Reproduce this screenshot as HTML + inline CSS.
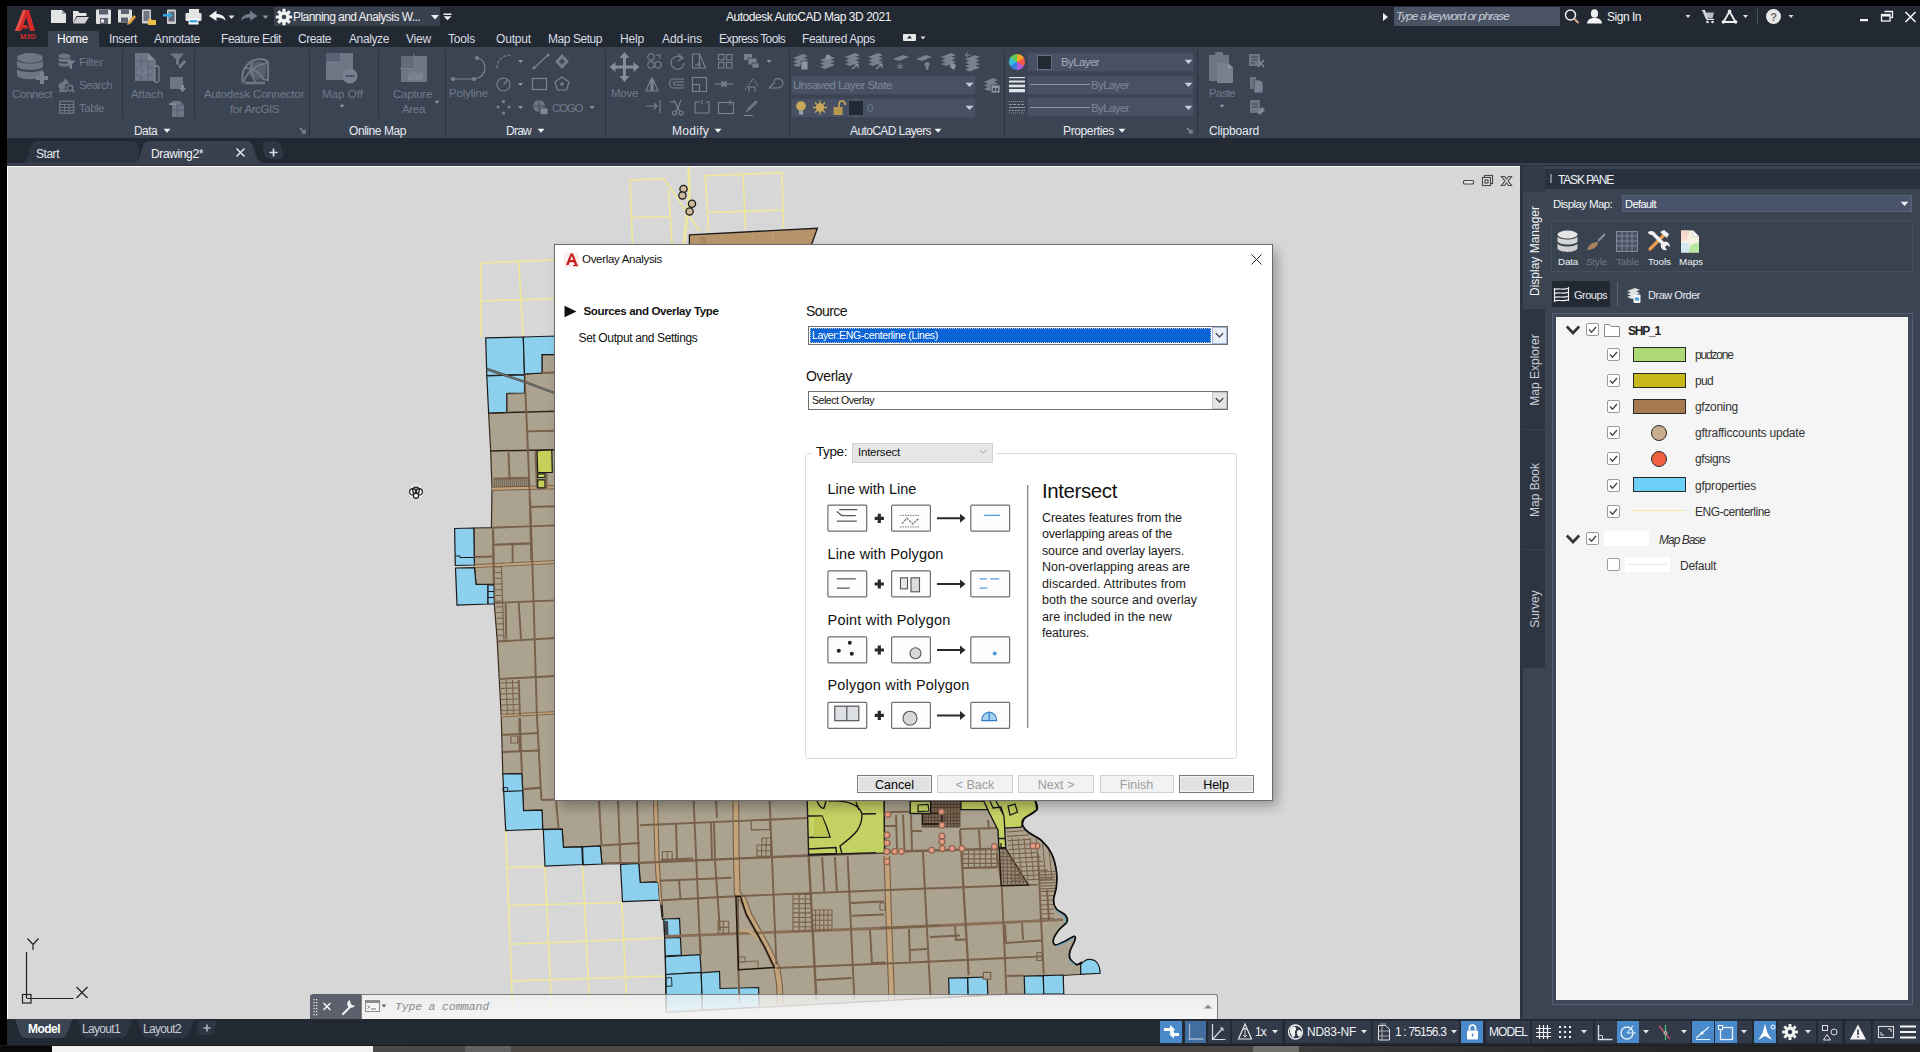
<!DOCTYPE html>
<html><head>
<meta charset="utf-8">
<title>Autodesk AutoCAD Map 3D 2021</title>
<style>
*{box-sizing:border-box;margin:0;padding:0}
html,body{width:1920px;height:1052px;overflow:hidden;background:#000}
body{position:relative;font-family:"Liberation Sans",sans-serif;font-size:12px;color:#e6e9ee}
.abs{position:absolute}
.t{position:absolute;white-space:nowrap;line-height:1}
#titlebar{left:7px;top:6px;width:1913px;height:22px;background:#222933}
#menubar{left:7px;top:28px;width:1913px;height:19px;background:#222933}
#ribbon{left:7px;top:47px;width:1913px;height:91px;background:#3b4453}
#doctabs{left:7px;top:138px;width:1913px;height:28px;background:#222933}
#canvas{left:7px;top:166px;width:1513px;height:853px;background:#d7d7d7;overflow:hidden}
#rightbg{left:1520px;top:166px;width:400px;height:853px;background:#3b4453}
#statusbar{left:7px;top:1019px;width:1913px;height:26px;background:#222933}
#bottomstrip{left:0;top:1045px;width:1920px;height:7px;background:#3a3a3a}
.mt{position:absolute;top:33px;font-size:12px;color:#d8dce3;white-space:nowrap;line-height:1}
.dis{color:#6d7685}
.ptitle{position:absolute;top:125px;font-size:12px;color:#e6e9ee;white-space:nowrap;line-height:1}
.psep{position:absolute;top:50px;width:1px;height:86px;background:#2c3441}
</style>
</head>
<body>
<!-- ===== window chrome ===== -->
<div class="abs" id="titlebar"></div>
<div class="abs" id="menubar"></div>
<div class="abs" id="ribbon"></div>
<div class="abs" id="doctabs"></div>
<div class="abs" id="canvas">
<svg class="abs" style="left:-7px;top:-166px" width="1920" height="1052" viewBox="0 0 1920 1052">
<polyline points="481,337 481,263 555,260" fill="none" stroke="#efe79a" stroke-width="1.6"></polyline>
<polyline points="518.8,261 523,337" fill="none" stroke="#efe79a" stroke-width="1.6"></polyline>
<polyline points="482,301 555,298.5" fill="none" stroke="#efe79a" stroke-width="1.6"></polyline>
<polyline points="632.5,245 630,180 664,178.6 700,232" fill="none" stroke="#efe79a" stroke-width="1.6"></polyline>
<polyline points="668.6,190 672,245" fill="none" stroke="#efe79a" stroke-width="1.6"></polyline>
<polyline points="631.5,217.5 670,216.8" fill="none" stroke="#efe79a" stroke-width="1.6"></polyline>
<polyline points="688.5,166 689.5,195 687,215 684,245" fill="none" stroke="#efe79a" stroke-width="2.6"></polyline>
<polyline points="708.6,231 705.4,175.7 782,172.7 783.5,228" fill="none" stroke="#efe79a" stroke-width="1.6"></polyline>
<polyline points="743,174 745.6,229.6" fill="none" stroke="#efe79a" stroke-width="1.6"></polyline>
<polyline points="707.3,212.5 782.8,210" fill="none" stroke="#efe79a" stroke-width="1.6"></polyline>
<polyline points="505.7,831 512.8,1015" fill="none" stroke="#efe79a" stroke-width="1.6"></polyline>
<polyline points="545,867 551.8,1015" fill="none" stroke="#efe79a" stroke-width="1.6"></polyline>
<polyline points="582.6,865.4 590,1015" fill="none" stroke="#efe79a" stroke-width="1.6"></polyline>
<polyline points="621.7,902.4 627.5,1015" fill="none" stroke="#efe79a" stroke-width="1.6"></polyline>
<polyline points="506.5,867.4 545,866.5" fill="none" stroke="#efe79a" stroke-width="1.6"></polyline>
<polyline points="508.5,905.5 621.7,902.5" fill="none" stroke="#efe79a" stroke-width="1.6"></polyline>
<polyline points="510.5,944.3 664,938" fill="none" stroke="#efe79a" stroke-width="1.6"></polyline>
<polyline points="512,981 665,976" fill="none" stroke="#efe79a" stroke-width="1.6"></polyline>
<path d="M542 354.7 L556 354.3 L556 800 L1035 800 C1035.3 801.6 1038.7 806.5 1036.9 809.6 C1035.1 812.7 1026.6 816.0 1024.2 818.4 C1021.8 820.8 1021.6 821.9 1022.3 824.2 C1022.9 826.5 1024.8 829.2 1028.1 832.0 C1031.3 834.8 1037.9 837.2 1041.8 840.8 C1045.7 844.4 1049.1 848.5 1051.5 853.5 C1053.9 858.5 1055.6 865.5 1056.4 871.0 C1057.2 876.5 1056.9 881.7 1056.4 886.6 C1055.9 891.5 1053.5 896.5 1053.5 900.2 C1053.5 903.9 1054.5 906.5 1056.4 909.0 C1058.3 911.5 1063.3 912.8 1065.1 914.9 C1066.9 917.0 1068.1 919.3 1067.1 921.7 C1066.1 924.1 1061.6 926.6 1059.3 929.5 C1057.0 932.4 1054.2 936.6 1053.5 939.2 C1052.8 941.8 1053.5 944.7 1055.4 945.0 C1057.3 945.3 1062.0 942.7 1065.1 941.2 C1068.2 939.8 1072.3 936.5 1073.9 936.3 C1075.5 936.1 1075.6 937.8 1074.9 940.2 C1074.2 942.7 1070.8 947.9 1070.0 951.0 C1069.2 954.1 1068.9 956.4 1070.0 958.7 C1071.1 961.0 1075.0 963.9 1076.8 964.6 C1078.6 965.3 1080.0 963.3 1080.7 963.0 L1080.7 974.3 L1063.2 975.5 L1063.2 994 L1007 994.3 L952 997 L760 1007.4 L666 1012.5 L665.3 956 L663.9 919 L662.4 919.5 L660.2 901 L659.6 900.2 L658.2 881.9 L640.2 882.5 L638.8 863.4 L602 864 L600.3 846 L563.5 847.4 L562.1 829.2 L542.7 829.2 L542.1 810.1 L523.6 810.6 L521.9 773.6 L502.8 774 L501.3 718 L497.2 640 L494.3 603.9 L494 585 L476 584.5 L474.5 567 L473.8 528 L491.4 527.7 L492 489 L490.7 451 L488.6 413 L506.7 412.4 L506.7 393.5 L524.5 393 L524.5 374 L542 373 Z" fill="#aba28f" stroke="#3a2a1c" stroke-width="1.200"></path>
<clipPath id="bc"><path d="M542 354.7 L556 354.3 L556 800 L1035 800 C1035.3 801.6 1038.7 806.5 1036.9 809.6 C1035.1 812.7 1026.6 816.0 1024.2 818.4 C1021.8 820.8 1021.6 821.9 1022.3 824.2 C1022.9 826.5 1024.8 829.2 1028.1 832.0 C1031.3 834.8 1037.9 837.2 1041.8 840.8 C1045.7 844.4 1049.1 848.5 1051.5 853.5 C1053.9 858.5 1055.6 865.5 1056.4 871.0 C1057.2 876.5 1056.9 881.7 1056.4 886.6 C1055.9 891.5 1053.5 896.5 1053.5 900.2 C1053.5 903.9 1054.5 906.5 1056.4 909.0 C1058.3 911.5 1063.3 912.8 1065.1 914.9 C1066.9 917.0 1068.1 919.3 1067.1 921.7 C1066.1 924.1 1061.6 926.6 1059.3 929.5 C1057.0 932.4 1054.2 936.6 1053.5 939.2 C1052.8 941.8 1053.5 944.7 1055.4 945.0 C1057.3 945.3 1062.0 942.7 1065.1 941.2 C1068.2 939.8 1072.3 936.5 1073.9 936.3 C1075.5 936.1 1075.6 937.8 1074.9 940.2 C1074.2 942.7 1070.8 947.9 1070.0 951.0 C1069.2 954.1 1068.9 956.4 1070.0 958.7 C1071.1 961.0 1075.0 963.9 1076.8 964.6 C1078.6 965.3 1080.0 963.3 1080.7 963.0 L1080.7 974.3 L1063.2 975.5 L1063.2 994 L1007 994.3 L952 997 L760 1007.4 L666 1012.5 L665.3 956 L663.9 919 L662.4 919.5 L660.2 901 L659.6 900.2 L658.2 881.9 L640.2 882.5 L638.8 863.4 L602 864 L600.3 846 L563.5 847.4 L562.1 829.2 L542.7 829.2 L542.1 810.1 L523.6 810.6 L521.9 773.6 L502.8 774 L501.3 718 L497.2 640 L494.3 603.9 L494 585 L476 584.5 L474.5 567 L473.8 528 L491.4 527.7 L492 489 L490.7 451 L488.6 413 L506.7 412.4 L506.7 393.5 L524.5 393 L524.5 374 L542 373 Z"></path></clipPath>
<polygon points="485.7,337.8 523.3,337 524.5,374.5 486.8,375.5" fill="#8cd0ed" stroke="#1a1a1a" stroke-width="1.2"></polygon>
<polygon points="523.3,337 556,336 556,354.3 542,354.7 542,373 524.5,374" fill="#8cd0ed" stroke="#1a1a1a" stroke-width="1.2"></polygon>
<polygon points="486.8,376 524.5,374.8 524.5,393 506.7,393.5 506.7,412.4 488.6,413" fill="#8cd0ed" stroke="#1a1a1a" stroke-width="1.2"></polygon>
<polyline points="486.8,369 524,381.6 556,393.5" fill="none" stroke="#4a4a4a" stroke-width="2.4"></polyline>
<polyline points="486.8,369 524,381.6 556,393.5" fill="none" stroke="#8a8a82" stroke-width="0.8"></polyline>
<polygon points="454.6,528.5 473.8,528 474.4,565 455.3,565.5" fill="#8cd0ed" stroke="#1a1a1a" stroke-width="1.2"></polygon>
<polyline points="455.2,556 460,556 460,557.5 474,557.5" fill="none" stroke="#1a1a1a" stroke-width="1"></polyline>
<polygon points="455.5,568 474.5,567.6 476,584.5 488,584.5 488,604 457,605.2" fill="#8cd0ed" stroke="#1a1a1a" stroke-width="1.2"></polygon>
<polygon points="488,585 494,585 494.3,604 488,604" fill="#8cd0ed" stroke="#1a1a1a" stroke-width="1.2"></polygon>
<polyline points="488,591.5 494.2,591.5" fill="none" stroke="#1a1a1a" stroke-width="1"></polyline>
<polyline points="488,597.5 494.2,597.5" fill="none" stroke="#1a1a1a" stroke-width="1"></polyline>
<polygon points="502.8,774 521.9,773.6 523.6,810.6 542.1,810.1 542.7,829.2 505.7,830.6" fill="#8cd0ed" stroke="#1a1a1a" stroke-width="1.2"></polygon>
<polyline points="503.2,791.5 522.6,790.8" fill="none" stroke="#1a1a1a" stroke-width="1.1"></polyline>
<polygon points="503,787.6 507.6,787.6 507.6,791.5 503,791.5" fill="none" stroke="#1a1a1a" stroke-width="0.9"></polygon>
<polygon points="543.3,829.7 562.1,829.2 563.5,847.4 581.8,846.9 582.6,864.5 545,866.2" fill="#8cd0ed" stroke="#1a1a1a" stroke-width="1.2"></polygon>
<polygon points="582.6,846.9 600.3,846 602,864 583.2,864.8" fill="#8cd0ed" stroke="#1a1a1a" stroke-width="1.2"></polygon>
<polygon points="620.5,864.5 638.8,863.4 640.2,882.5 658.2,881.9 659.6,900.2 622.5,901.6" fill="#8cd0ed" stroke="#1a1a1a" stroke-width="1.2"></polygon>
<polygon points="663.9,919 679.5,918.4 680.4,936.6 664.7,937.2" fill="#8cd0ed" stroke="#1a1a1a" stroke-width="1.2"></polygon>
<polygon points="664.7,938 680.4,937.5 681.3,955.2 665.3,956" fill="#8cd0ed" stroke="#1a1a1a" stroke-width="1.2"></polygon>
<polygon points="665.3,956.6 700,954.6 701.2,972.3 665.8,974.5" fill="#8cd0ed" stroke="#1a1a1a" stroke-width="1.2"></polygon>
<polygon points="665.8,974.5 701.2,972.3 702.5,1010 666.5,1012" fill="#8cd0ed" stroke="#1a1a1a" stroke-width="1.2"></polygon>
<polygon points="701.2,972.8 719.5,971.5 720,988.5 758.6,987.5 759.2,1007 702.5,1010" fill="#8cd0ed" stroke="#1a1a1a" stroke-width="1.2"></polygon>
<polygon points="665.8,978 671.5,977.6 672,986 666,986.4" fill="none" stroke="#1a1a1a" stroke-width="0.9"></polygon>
<polygon points="660.8,903 662.5,903 663.5,917 661.5,917" fill="#222" stroke="none" stroke-width="1"></polygon>
<polygon points="664.5,921 668,921 668.5,935 665,935" fill="#333" stroke="none" stroke-width="1" opacity="0.85"></polygon>
<polygon points="948.6,978.2 967.7,977.6 968.2,996.2 949.2,997.2" fill="#8cd0ed" stroke="#1a1a1a" stroke-width="1.2"></polygon>
<polygon points="967.7,977.6 987.2,977 987.8,995.2 968.2,996.2" fill="#8cd0ed" stroke="#1a1a1a" stroke-width="1.2"></polygon>
<polygon points="983.3,972.3 990.7,972.3 990.7,979.2 983.3,979.2" fill="#aba28f" stroke="#786049" stroke-width="1.2"></polygon>
<polygon points="1024.2,976.2 1043.3,975.6 1043.8,994.2 1024.8,994.3" fill="#8cd0ed" stroke="#1a1a1a" stroke-width="1.2"></polygon>
<polygon points="1043.3,975.6 1063.2,975 1063.8,994 1043.8,994.2" fill="#8cd0ed" stroke="#1a1a1a" stroke-width="1.2"></polygon>
<path d="M1080.700 974.300 L1080.700 964.600 C1084 960 1088 958.600 1092 959.600 C1097 960.500 1100 966 1100.200 973.300 Z" fill="#8cd0ed" stroke="#1a1a1a" stroke-width="1.200"></path>
<g clip-path="url(#bc)">
<polyline points="735.8,800 736.2,850 737.2,893 740.5,897 743.5,900 749,915 767.5,948 777,968.5 779.5,985 780.2,1005" fill="none" stroke="#786049" stroke-width="6.8"></polyline>
<polyline points="735.8,800 736.2,850 737.2,893 740.5,897 743.5,900 749,915 767.5,948 777,968.5 779.5,985 780.2,1005" fill="none" stroke="#c4a47b" stroke-width="4.6"></polyline>
<polyline points="655.5,800 657,860 660,905" fill="none" stroke="#786049" stroke-width="5.2"></polyline>
<polyline points="655.5,800 657,860 660,905" fill="none" stroke="#c4a47b" stroke-width="3"></polyline>
<polyline points="886.8,856 888.8,920 891.8,1002" fill="none" stroke="#786049" stroke-width="6.6"></polyline>
<polyline points="886.8,856 888.8,920 891.8,1002" fill="none" stroke="#c4a47b" stroke-width="4.4"></polyline>
<polyline points="474.2,566.2 556,562" fill="none" stroke="#c4a47b" stroke-width="3"></polyline>
<polyline points="492,488.8 556,487.2" fill="none" stroke="#c4a47b" stroke-width="3"></polyline>
<polyline points="500.5,715.7 556,712.7" fill="none" stroke="#c4a47b" stroke-width="2.6"></polyline>
<polyline points="665.3,936.3 900,927.5 1063,919.7" fill="none" stroke="#8a6f58" stroke-width="2.8"></polyline>
<polyline points="738.5,931 747,930.5 754,934 758,940" fill="none" stroke="#c4a47b" stroke-width="2.6"></polyline>
<polyline points="686,232 690,245" fill="none" stroke="#c4a47b" stroke-width="2"></polyline>
<polyline points="488.6,413 556,411.3" fill="none" stroke="#2e241a" stroke-width="1.5"></polyline>
<polyline points="490.7,451 556,449.7" fill="none" stroke="#2e241a" stroke-width="1.5"></polyline>
<polyline points="492,487.2 556,485.6" fill="none" stroke="#786049" stroke-width="1"></polyline>
<polyline points="492,490.4 556,488.8" fill="none" stroke="#786049" stroke-width="1"></polyline>
<polyline points="491.4,527.7 556,525.4" fill="none" stroke="#786049" stroke-width="1.9"></polyline>
<polyline points="524.5,374 526.3,412.4 527.9,450 529.5,489.4 531.3,560" fill="none" stroke="#786049" stroke-width="1.9"></polyline>
<polyline points="530.2,500 533.6,602.7 536.9,715.6 541.4,800" fill="none" stroke="#786049" stroke-width="1.9"></polyline>
<polyline points="527.9,431.4 556,430.8" fill="none" stroke="#786049" stroke-width="1.9"></polyline>
<polyline points="530,507 556,506.3" fill="none" stroke="#786049" stroke-width="1.9"></polyline>
<polyline points="508.5,452.4 509.6,479.8" fill="none" stroke="#786049" stroke-width="1.9"></polyline>
<polyline points="535.4,451.3 537,487.8" fill="none" stroke="#786049" stroke-width="1.9"></polyline>
<polyline points="506.7,393.5 524.5,393" fill="none" stroke="#786049" stroke-width="1.9"></polyline>
<polyline points="506.7,412.4 506.7,393.5" fill="none" stroke="#786049" stroke-width="1.9"></polyline>
<polyline points="542,373 556,372.5" fill="none" stroke="#786049" stroke-width="1.9"></polyline>
<polyline points="493.6,544.8 531,543.4" fill="none" stroke="#786049" stroke-width="2.3"></polyline>
<polyline points="512.6,544.5 512.6,562.8" fill="none" stroke="#786049" stroke-width="1.9"></polyline>
<polyline points="493,528.5 494.3,603.9" fill="none" stroke="#786049" stroke-width="2.3"></polyline>
<polyline points="474.2,557 493.5,556.5" fill="none" stroke="#786049" stroke-width="1.9"></polyline>
<polyline points="474.2,564.7 556,560.5" fill="none" stroke="#786049" stroke-width="0.9"></polyline>
<polyline points="474.2,567.7 556,563.5" fill="none" stroke="#786049" stroke-width="0.9"></polyline>
<polyline points="476,584.5 494,584.5" fill="none" stroke="#2e241a" stroke-width="1.3"></polyline>
<polyline points="494.3,603 556,600.4" fill="none" stroke="#786049" stroke-width="1.9"></polyline>
<polyline points="505.7,603.9 506.2,639.2" fill="none" stroke="#786049" stroke-width="1.9"></polyline>
<polyline points="518.7,603 521,639" fill="none" stroke="#786049" stroke-width="1.9"></polyline>
<polyline points="497.2,641.5 556,638" fill="none" stroke="#786049" stroke-width="1.9"></polyline>
<polyline points="499,679 556,676" fill="none" stroke="#786049" stroke-width="1.9"></polyline>
<polyline points="500.5,714.5 556,711.5" fill="none" stroke="#786049" stroke-width="0.9"></polyline>
<polyline points="500.5,717 556,714" fill="none" stroke="#786049" stroke-width="0.9"></polyline>
<polyline points="518.7,680 520,715.7" fill="none" stroke="#786049" stroke-width="1.9"></polyline>
<polyline points="520,718 521,752" fill="none" stroke="#786049" stroke-width="1.9"></polyline>
<polyline points="502,735 538,733" fill="none" stroke="#786049" stroke-width="1.9"></polyline>
<polyline points="503,752 540,750.5" fill="none" stroke="#786049" stroke-width="1.9"></polyline>
<polyline points="503.5,791 541,787.7" fill="none" stroke="#786049" stroke-width="2.3"></polyline>
<polyline points="519.5,718 519.5,752" fill="none" stroke="#786049" stroke-width="1.9"></polyline>
<polyline points="521,752 522,773.6" fill="none" stroke="#786049" stroke-width="1.9"></polyline>
<polygon points="510.9,736 517.7,736 517.7,743 510.9,743" fill="none" stroke="#786049" stroke-width="1.2"></polygon>
<polyline points="494.8,567 501.6,566.8" fill="none" stroke="#786049" stroke-width="1"></polyline>
<polyline points="495,572.7 501.8,572.5" fill="none" stroke="#786049" stroke-width="1"></polyline>
<polyline points="495.2,578.4 502,578.2" fill="none" stroke="#786049" stroke-width="1"></polyline>
<polyline points="495.4,584.1 502.2,583.9" fill="none" stroke="#786049" stroke-width="1"></polyline>
<polyline points="495.6,589.8 502.4,589.6" fill="none" stroke="#786049" stroke-width="1"></polyline>
<polyline points="495.8,595.5 502.6,595.3" fill="none" stroke="#786049" stroke-width="1"></polyline>
<polyline points="496,601.2 502.8,601" fill="none" stroke="#786049" stroke-width="1"></polyline>
<polyline points="496.2,606.9 503,606.7" fill="none" stroke="#786049" stroke-width="1"></polyline>
<polyline points="496.4,612.6 503.2,612.4" fill="none" stroke="#786049" stroke-width="1"></polyline>
<polyline points="496.6,618.3 503.4,618.1" fill="none" stroke="#786049" stroke-width="1"></polyline>
<polyline points="496.8,624 503.6,623.8" fill="none" stroke="#786049" stroke-width="1"></polyline>
<polyline points="497,629.7 503.8,629.5" fill="none" stroke="#786049" stroke-width="1"></polyline>
<polyline points="497.2,635.4 504,635.2" fill="none" stroke="#786049" stroke-width="1"></polyline>
<polyline points="501.4,567 504,641" fill="none" stroke="#786049" stroke-width="1.1"></polyline>
<polyline points="500.5,683 518.5,682.5" fill="none" stroke="#786049" stroke-width="1"></polyline>
<polyline points="500.7,688.5 518.5,688" fill="none" stroke="#786049" stroke-width="1"></polyline>
<polyline points="500.9,694 518.5,693.5" fill="none" stroke="#786049" stroke-width="1"></polyline>
<polyline points="501.1,699.5 518.5,699" fill="none" stroke="#786049" stroke-width="1"></polyline>
<polyline points="501.3,705 518.5,704.5" fill="none" stroke="#786049" stroke-width="1"></polyline>
<polyline points="501.5,710.5 518.5,710" fill="none" stroke="#786049" stroke-width="1"></polyline>
<polyline points="506,680 507.5,715" fill="none" stroke="#786049" stroke-width="1"></polyline>
<polyline points="512.5,680 513.5,715" fill="none" stroke="#786049" stroke-width="1"></polyline>
<polyline points="494,479 494.3,487" fill="none" stroke="#5b4a3a" stroke-width="0.9"></polyline>
<polyline points="496,479 496.3,487" fill="none" stroke="#5b4a3a" stroke-width="0.9"></polyline>
<polyline points="498,479 498.3,487" fill="none" stroke="#5b4a3a" stroke-width="0.9"></polyline>
<polyline points="500,479 500.3,487" fill="none" stroke="#5b4a3a" stroke-width="0.9"></polyline>
<polyline points="502,479 502.3,487" fill="none" stroke="#5b4a3a" stroke-width="0.9"></polyline>
<polyline points="504,479 504.3,487" fill="none" stroke="#5b4a3a" stroke-width="0.9"></polyline>
<polyline points="506,479 506.3,487" fill="none" stroke="#5b4a3a" stroke-width="0.9"></polyline>
<polyline points="508,479 508.3,487" fill="none" stroke="#5b4a3a" stroke-width="0.9"></polyline>
<polyline points="510,479 510.3,487" fill="none" stroke="#5b4a3a" stroke-width="0.9"></polyline>
<polyline points="512,479 512.3,487" fill="none" stroke="#5b4a3a" stroke-width="0.9"></polyline>
<polyline points="514,479 514.3,487" fill="none" stroke="#5b4a3a" stroke-width="0.9"></polyline>
<polyline points="516,479 516.3,487" fill="none" stroke="#5b4a3a" stroke-width="0.9"></polyline>
<polyline points="518,479 518.3,487" fill="none" stroke="#5b4a3a" stroke-width="0.9"></polyline>
<polyline points="520,479 520.3,487" fill="none" stroke="#5b4a3a" stroke-width="0.9"></polyline>
<polyline points="522,479 522.3,487" fill="none" stroke="#5b4a3a" stroke-width="0.9"></polyline>
<polyline points="524,479 524.3,487" fill="none" stroke="#5b4a3a" stroke-width="0.9"></polyline>
<polyline points="526,479 526.3,487" fill="none" stroke="#5b4a3a" stroke-width="0.9"></polyline>
<polyline points="528,479 528.3,487" fill="none" stroke="#5b4a3a" stroke-width="0.9"></polyline>
<polyline points="493.6,478.6 529,477.8" fill="none" stroke="#786049" stroke-width="1.9"></polyline>
<polygon points="537,450.6 551.8,450 552.3,472.5 537.7,472.5" fill="#c6d05a" stroke="#1a1a1a" stroke-width="1.2"></polygon>
<polygon points="537.7,473.8 545,473.8 545,477.5 537.7,477.5" fill="#c6d05a" stroke="#1a1a1a" stroke-width="1.2"></polygon>
<polygon points="537.7,479.8 545,479.8 545,487.8 537.7,487.8" fill="#c6d05a" stroke="#1a1a1a" stroke-width="1.2"></polygon>
<polyline points="546.5,473 546.5,488" fill="none" stroke="#786049" stroke-width="1.9"></polyline>
<polyline points="541.4,800 556,799.5" fill="none" stroke="#786049" stroke-width="1.9"></polyline>
<polyline points="640,825.2 807,818" fill="none" stroke="#786049" stroke-width="1.9"></polyline>
<polyline points="523,828.5 542,828" fill="none" stroke="#786049" stroke-width="1.9"></polyline>
<polyline points="603,863.5 640,862.8 808,855.5" fill="none" stroke="#786049" stroke-width="2.3"></polyline>
<polyline points="808,855.5 884,852.5" fill="none" stroke="#786049" stroke-width="2.3"></polyline>
<polyline points="880,852 999,848.6" fill="none" stroke="#786049" stroke-width="2.4"></polyline>
<polyline points="659.5,880.8 731.6,877.8" fill="none" stroke="#786049" stroke-width="1.9"></polyline>
<polyline points="661.4,900.2 735.5,896.3" fill="none" stroke="#786049" stroke-width="1.9"></polyline>
<polyline points="741.3,896 900,889.5 1037.9,884.6" fill="none" stroke="#786049" stroke-width="1.9"></polyline>
<polyline points="776.4,968 900,963 1041.8,956.4" fill="none" stroke="#786049" stroke-width="1.9"></polyline>
<polyline points="601,845.5 640,843" fill="none" stroke="#786049" stroke-width="1.9"></polyline>
<polyline points="556,800 560,846" fill="none" stroke="#786049" stroke-width="1.9"></polyline>
<polyline points="599,800 601.5,846" fill="none" stroke="#786049" stroke-width="1.9"></polyline>
<polyline points="618,800 620.5,864" fill="none" stroke="#786049" stroke-width="1.9"></polyline>
<polyline points="637,800 639,863" fill="none" stroke="#786049" stroke-width="1.9"></polyline>
<polyline points="676,824 677,860" fill="none" stroke="#786049" stroke-width="1.9"></polyline>
<polyline points="693.6,800 700.4,954.8" fill="none" stroke="#786049" stroke-width="1.9"></polyline>
<polyline points="711,822 712,859" fill="none" stroke="#786049" stroke-width="1.9"></polyline>
<polyline points="714,822 715,859" fill="none" stroke="#786049" stroke-width="1.9"></polyline>
<polyline points="716,800 717,818" fill="none" stroke="#786049" stroke-width="1.9"></polyline>
<polyline points="715,861 720,931" fill="none" stroke="#786049" stroke-width="1.9"></polyline>
<polyline points="769.6,800 776.4,964.6" fill="none" stroke="#786049" stroke-width="1.9"></polyline>
<polyline points="808.6,855.4 816.4,1000" fill="none" stroke="#786049" stroke-width="2.3"></polyline>
<polyline points="822.2,857.4 824.2,891.5" fill="none" stroke="#786049" stroke-width="1.9"></polyline>
<polyline points="834.9,857 836.8,891" fill="none" stroke="#786049" stroke-width="1.9"></polyline>
<polyline points="847.6,856.4 854.4,1000" fill="none" stroke="#786049" stroke-width="1.9"></polyline>
<polyline points="870,929.5 872,963.6" fill="none" stroke="#786049" stroke-width="1.9"></polyline>
<polyline points="922.9,851.5 930.7,1000" fill="none" stroke="#786049" stroke-width="1.9"></polyline>
<polyline points="960,830 968.7,975.3" fill="none" stroke="#786049" stroke-width="2.2"></polyline>
<polyline points="997,853.5 1001.8,886.6 1006.7,1000" fill="none" stroke="#786049" stroke-width="1.9"></polyline>
<polyline points="1037.9,853.5 1043.7,974.3" fill="none" stroke="#786049" stroke-width="1.9"></polyline>
<polyline points="738,897 738.4,969.8 739.5,1003" fill="none" stroke="#786049" stroke-width="1.9"></polyline>
<polyline points="679,880 680.5,900" fill="none" stroke="#786049" stroke-width="1.9"></polyline>
<polyline points="661,860 693,858.5" fill="none" stroke="#786049" stroke-width="1.9"></polyline>
<polyline points="700,936 701,955" fill="none" stroke="#786049" stroke-width="1.9"></polyline>
<polyline points="816.4,980 851.5,978" fill="none" stroke="#786049" stroke-width="1.9"></polyline>
<polyline points="851,903 884,901.5" fill="none" stroke="#786049" stroke-width="1.9"></polyline>
<polyline points="852,915.8 884,914.5" fill="none" stroke="#786049" stroke-width="1.9"></polyline>
<polyline points="872,963 885,962.5" fill="none" stroke="#786049" stroke-width="1.9"></polyline>
<polygon points="751,820.3 769.6,819.5 770,829.5 751.4,830" fill="none" stroke="#786049" stroke-width="1.3"></polygon>
<polyline points="662.4,851.5 662.4,860.3" fill="none" stroke="#786049" stroke-width="1.1"></polyline>
<polyline points="667.3,851.5 667.3,860.3" fill="none" stroke="#786049" stroke-width="1.1"></polyline>
<polyline points="672.2,851.5 672.2,860.3" fill="none" stroke="#786049" stroke-width="1.1"></polyline>
<polyline points="662.4,851.5 672.2,851.5" fill="none" stroke="#786049" stroke-width="1.1"></polyline>
<polyline points="662.4,860.3 672.2,860.3" fill="none" stroke="#786049" stroke-width="1.1"></polyline>
<polyline points="718,921.3 718,933.4" fill="none" stroke="#786049" stroke-width="1.1"></polyline>
<polyline points="723.35,921.3 723.35,933.4" fill="none" stroke="#786049" stroke-width="1.1"></polyline>
<polyline points="728.7,921.3 728.7,933.4" fill="none" stroke="#786049" stroke-width="1.1"></polyline>
<polyline points="718,921.3 728.7,921.3" fill="none" stroke="#786049" stroke-width="1.1"></polyline>
<polyline points="718,927.35 728.7,927.35" fill="none" stroke="#786049" stroke-width="1.1"></polyline>
<polyline points="718,933.4 728.7,933.4" fill="none" stroke="#786049" stroke-width="1.1"></polyline>
<polyline points="757,845 757,856.4" fill="none" stroke="#786049" stroke-width="1.1"></polyline>
<polyline points="761.533,845 761.533,856.4" fill="none" stroke="#786049" stroke-width="1.1"></polyline>
<polyline points="766.067,845 766.067,856.4" fill="none" stroke="#786049" stroke-width="1.1"></polyline>
<polyline points="770.6,845 770.6,856.4" fill="none" stroke="#786049" stroke-width="1.1"></polyline>
<polyline points="757,845 770.6,845" fill="none" stroke="#786049" stroke-width="1.1"></polyline>
<polyline points="757,850.7 770.6,850.7" fill="none" stroke="#786049" stroke-width="1.1"></polyline>
<polyline points="757,856.4 770.6,856.4" fill="none" stroke="#786049" stroke-width="1.1"></polyline>
<polyline points="762,838 762,845" fill="none" stroke="#786049" stroke-width="1.1"></polyline>
<polyline points="766.3,838 766.3,845" fill="none" stroke="#786049" stroke-width="1.1"></polyline>
<polyline points="770.6,838 770.6,845" fill="none" stroke="#786049" stroke-width="1.1"></polyline>
<polyline points="762,838 770.6,838" fill="none" stroke="#786049" stroke-width="1.1"></polyline>
<polyline points="762,845 770.6,845" fill="none" stroke="#786049" stroke-width="1.1"></polyline>
<polyline points="793,894.4 793,931.4" fill="none" stroke="#786049" stroke-width="1.1"></polyline>
<polyline points="799.167,894.4 799.167,931.4" fill="none" stroke="#786049" stroke-width="1.1"></polyline>
<polyline points="805.333,894.4 805.333,931.4" fill="none" stroke="#786049" stroke-width="1.1"></polyline>
<polyline points="811.5,894.4 811.5,931.4" fill="none" stroke="#786049" stroke-width="1.1"></polyline>
<polyline points="793,894.4 811.5,894.4" fill="none" stroke="#786049" stroke-width="1.1"></polyline>
<polyline points="793,899.025 811.5,899.025" fill="none" stroke="#786049" stroke-width="1.1"></polyline>
<polyline points="793,903.65 811.5,903.65" fill="none" stroke="#786049" stroke-width="1.1"></polyline>
<polyline points="793,908.275 811.5,908.275" fill="none" stroke="#786049" stroke-width="1.1"></polyline>
<polyline points="793,912.9 811.5,912.9" fill="none" stroke="#786049" stroke-width="1.1"></polyline>
<polyline points="793,917.525 811.5,917.525" fill="none" stroke="#786049" stroke-width="1.1"></polyline>
<polyline points="793,922.15 811.5,922.15" fill="none" stroke="#786049" stroke-width="1.1"></polyline>
<polyline points="793,926.775 811.5,926.775" fill="none" stroke="#786049" stroke-width="1.1"></polyline>
<polyline points="793,931.4 811.5,931.4" fill="none" stroke="#786049" stroke-width="1.1"></polyline>
<polyline points="811.5,910 811.5,930.4" fill="none" stroke="#786049" stroke-width="1.1"></polyline>
<polyline points="815.6,910 815.6,930.4" fill="none" stroke="#786049" stroke-width="1.1"></polyline>
<polyline points="819.7,910 819.7,930.4" fill="none" stroke="#786049" stroke-width="1.1"></polyline>
<polyline points="823.8,910 823.8,930.4" fill="none" stroke="#786049" stroke-width="1.1"></polyline>
<polyline points="827.9,910 827.9,930.4" fill="none" stroke="#786049" stroke-width="1.1"></polyline>
<polyline points="832,910 832,930.4" fill="none" stroke="#786049" stroke-width="1.1"></polyline>
<polyline points="811.5,910 832,910" fill="none" stroke="#786049" stroke-width="1.1"></polyline>
<polyline points="811.5,915.1 832,915.1" fill="none" stroke="#786049" stroke-width="1.1"></polyline>
<polyline points="811.5,920.2 832,920.2" fill="none" stroke="#786049" stroke-width="1.1"></polyline>
<polyline points="811.5,925.3 832,925.3" fill="none" stroke="#786049" stroke-width="1.1"></polyline>
<polyline points="811.5,930.4 832,930.4" fill="none" stroke="#786049" stroke-width="1.1"></polyline>
<polyline points="880,903 880,910" fill="none" stroke="#786049" stroke-width="1.1"></polyline>
<polyline points="885,903 885,910" fill="none" stroke="#786049" stroke-width="1.1"></polyline>
<polyline points="880,903 885,903" fill="none" stroke="#786049" stroke-width="1.1"></polyline>
<polyline points="880,910 885,910" fill="none" stroke="#786049" stroke-width="1.1"></polyline>
<polyline points="739,957 739,962" fill="none" stroke="#786049" stroke-width="1"></polyline>
<polyline points="745,957 745,962" fill="none" stroke="#786049" stroke-width="1"></polyline>
<polyline points="739,957 745,957" fill="none" stroke="#786049" stroke-width="1"></polyline>
<polyline points="739,962 745,962" fill="none" stroke="#786049" stroke-width="1"></polyline>
<polyline points="739,962 758,961 758,969" fill="none" stroke="#786049" stroke-width="1"></polyline>
<polygon points="735.9,896.3 740.4,896.3 746.2,913.9 764.7,947 774.5,967.5 738.4,969.8" fill="none" stroke="#20160e" stroke-width="1.5"></polygon>
<polyline points="880,928 940,925.5" fill="none" stroke="#786049" stroke-width="1.9"></polyline>
<polyline points="930,937 960,935.5" fill="none" stroke="#786049" stroke-width="1.9"></polyline>
<polyline points="955,926 956,940 966,939.5" fill="none" stroke="#786049" stroke-width="1.9"></polyline>
<polyline points="909,929 910,961" fill="none" stroke="#786049" stroke-width="1.9"></polyline>
<polyline points="910,950 927,949" fill="none" stroke="#786049" stroke-width="1.9"></polyline>
<polyline points="1005,925 1006,943 1042,940.5" fill="none" stroke="#786049" stroke-width="1.9"></polyline>
<polyline points="1022,923 1023,940" fill="none" stroke="#786049" stroke-width="1.9"></polyline>
<polygon points="1037,952.5 1042,952.5 1042,960.5 1037,960.5" fill="none" stroke="#786049" stroke-width="1.2"></polygon>
<polyline points="1007,976 1024,975.5" fill="none" stroke="#786049" stroke-width="1.9"></polyline>
<polyline points="962.8,849.6 962.8,868" fill="none" stroke="#786049" stroke-width="1.2"></polyline>
<polyline points="968.5,849.6 968.5,868" fill="none" stroke="#786049" stroke-width="1.2"></polyline>
<polyline points="974.2,849.6 974.2,868" fill="none" stroke="#786049" stroke-width="1.2"></polyline>
<polyline points="979.9,849.6 979.9,868" fill="none" stroke="#786049" stroke-width="1.2"></polyline>
<polyline points="985.6,849.6 985.6,868" fill="none" stroke="#786049" stroke-width="1.2"></polyline>
<polyline points="991.3,849.6 991.3,868" fill="none" stroke="#786049" stroke-width="1.2"></polyline>
<polyline points="997,849.6 997,868" fill="none" stroke="#786049" stroke-width="1.2"></polyline>
<polyline points="962.8,849.6 997,849.6" fill="none" stroke="#786049" stroke-width="1.2"></polyline>
<polyline points="962.8,854.2 997,854.2" fill="none" stroke="#786049" stroke-width="1.2"></polyline>
<polyline points="962.8,858.8 997,858.8" fill="none" stroke="#786049" stroke-width="1.2"></polyline>
<polyline points="962.8,863.4 997,863.4" fill="none" stroke="#786049" stroke-width="1.2"></polyline>
<polyline points="962.8,868 997,868" fill="none" stroke="#786049" stroke-width="1.2"></polyline>
<polyline points="962,868 997,867" fill="none" stroke="#786049" stroke-width="1.9"></polyline>
<polygon points="999.3,848.6 1005.7,848.6 1028.5,885 1001.2,885.6" fill="#9a8c78" stroke="#20160e" stroke-width="1.4"></polygon>
<polyline points="999.82,853 1008.46,853" fill="none" stroke="#5e4a38" stroke-width="0.8"></polyline>
<polyline points="1000,856.6 1010.72,856.6" fill="none" stroke="#5e4a38" stroke-width="0.8"></polyline>
<polyline points="1000.18,860.2 1012.97,860.2" fill="none" stroke="#5e4a38" stroke-width="0.8"></polyline>
<polyline points="1000.36,863.8 1015.23,863.8" fill="none" stroke="#5e4a38" stroke-width="0.8"></polyline>
<polyline points="1000.54,867.4 1017.49,867.4" fill="none" stroke="#5e4a38" stroke-width="0.8"></polyline>
<polyline points="1000.72,871 1019.74,871" fill="none" stroke="#5e4a38" stroke-width="0.8"></polyline>
<polyline points="1000.9,874.6 1022,874.6" fill="none" stroke="#5e4a38" stroke-width="0.8"></polyline>
<polyline points="1001.08,878.2 1024.26,878.2" fill="none" stroke="#5e4a38" stroke-width="0.8"></polyline>
<polyline points="1001.26,881.8 1026.52,881.8" fill="none" stroke="#5e4a38" stroke-width="0.8"></polyline>
<polyline points="1003,849 1003.5,885.3" fill="none" stroke="#5e4a38" stroke-width="0.8"></polyline>
<polyline points="1007,850.673 1007.5,885.3" fill="none" stroke="#5e4a38" stroke-width="0.8"></polyline>
<polyline points="1011,857.053 1011.5,885.3" fill="none" stroke="#5e4a38" stroke-width="0.8"></polyline>
<polyline points="1015,863.433 1015.5,885.3" fill="none" stroke="#5e4a38" stroke-width="0.8"></polyline>
<polyline points="1019,869.812 1019.5,885.3" fill="none" stroke="#5e4a38" stroke-width="0.8"></polyline>
<polyline points="1023,876.192 1023.5,885.3" fill="none" stroke="#5e4a38" stroke-width="0.8"></polyline>
<polyline points="1006.5,832 1026,830.5" fill="none" stroke="#786049" stroke-width="1.1"></polyline>
<polyline points="1007.03,836.4 1028.42,834.9" fill="none" stroke="#786049" stroke-width="1.1"></polyline>
<polyline points="1007.56,840.8 1030.84,839.3" fill="none" stroke="#786049" stroke-width="1.1"></polyline>
<polyline points="1008.08,845.2 1033.26,843.7" fill="none" stroke="#786049" stroke-width="1.1"></polyline>
<polyline points="1008.61,849.6 1035.68,848.1" fill="none" stroke="#786049" stroke-width="1.1"></polyline>
<polyline points="1009.14,854 1038.1,852.5" fill="none" stroke="#786049" stroke-width="1.1"></polyline>
<polyline points="1009.67,858.4 1040.52,856.9" fill="none" stroke="#786049" stroke-width="1.1"></polyline>
<polyline points="1010.2,862.8 1042.94,861.3" fill="none" stroke="#786049" stroke-width="1.1"></polyline>
<polyline points="1010.72,867.2 1045.36,865.7" fill="none" stroke="#786049" stroke-width="1.1"></polyline>
<polyline points="1011.25,871.6 1047.78,870.1" fill="none" stroke="#786049" stroke-width="1.1"></polyline>
<polyline points="1011.78,876 1050.2,874.5" fill="none" stroke="#786049" stroke-width="1.1"></polyline>
<polyline points="1012.31,880.4 1052.62,878.9" fill="none" stroke="#786049" stroke-width="1.1"></polyline>
<polyline points="1012,838 1016,880" fill="none" stroke="#786049" stroke-width="1"></polyline>
<polyline points="1018,838 1022,880" fill="none" stroke="#786049" stroke-width="1"></polyline>
<polyline points="1024,838 1028,880" fill="none" stroke="#786049" stroke-width="1"></polyline>
<polyline points="1030,838 1034,880" fill="none" stroke="#786049" stroke-width="1"></polyline>
<polyline points="1036,838 1040,880" fill="none" stroke="#786049" stroke-width="1"></polyline>
<polyline points="1042,838 1046,880" fill="none" stroke="#786049" stroke-width="1"></polyline>
<polyline points="1048,838 1052,880" fill="none" stroke="#786049" stroke-width="1"></polyline>
<polyline points="1039,872 1055,871.5" fill="none" stroke="#786049" stroke-width="1.2"></polyline>
<polyline points="1039,874.8 1055,874.3" fill="none" stroke="#786049" stroke-width="1.2"></polyline>
<polyline points="1039,877.6 1055,877.1" fill="none" stroke="#786049" stroke-width="1.2"></polyline>
<polyline points="1039,880.4 1055,879.9" fill="none" stroke="#786049" stroke-width="1.2"></polyline>
<polyline points="1039,883.2 1055,882.7" fill="none" stroke="#786049" stroke-width="1.2"></polyline>
<polyline points="1039,886 1055,885.5" fill="none" stroke="#786049" stroke-width="1.2"></polyline>
<polyline points="1039,888.8 1055,888.3" fill="none" stroke="#786049" stroke-width="1.2"></polyline>
<polyline points="1039,891.6 1055,891.1" fill="none" stroke="#786049" stroke-width="1.2"></polyline>
<polyline points="1039.5,896 1054,895.5" fill="none" stroke="#786049" stroke-width="1"></polyline>
<polyline points="1039.5,900.5 1054,900" fill="none" stroke="#786049" stroke-width="1"></polyline>
<polyline points="1039.5,905 1054,904.5" fill="none" stroke="#786049" stroke-width="1"></polyline>
<polyline points="1039.5,909.5 1054,909" fill="none" stroke="#786049" stroke-width="1"></polyline>
<polyline points="1039.5,914 1054,913.5" fill="none" stroke="#786049" stroke-width="1"></polyline>
<polyline points="1039.5,918.5 1054,918" fill="none" stroke="#786049" stroke-width="1"></polyline>
<polyline points="1047,890 1049,920" fill="none" stroke="#786049" stroke-width="1.9"></polyline>
<polygon points="922,801 960,801 960,827 922,827" fill="#7d6b58" stroke="none" stroke-width="1"></polygon>
<polyline points="922,801 922,827" fill="none" stroke="#4a3a2c" stroke-width="0.8"></polyline>
<polyline points="925.167,801 925.167,827" fill="none" stroke="#4a3a2c" stroke-width="0.8"></polyline>
<polyline points="928.333,801 928.333,827" fill="none" stroke="#4a3a2c" stroke-width="0.8"></polyline>
<polyline points="931.5,801 931.5,827" fill="none" stroke="#4a3a2c" stroke-width="0.8"></polyline>
<polyline points="934.667,801 934.667,827" fill="none" stroke="#4a3a2c" stroke-width="0.8"></polyline>
<polyline points="937.833,801 937.833,827" fill="none" stroke="#4a3a2c" stroke-width="0.8"></polyline>
<polyline points="941,801 941,827" fill="none" stroke="#4a3a2c" stroke-width="0.8"></polyline>
<polyline points="944.167,801 944.167,827" fill="none" stroke="#4a3a2c" stroke-width="0.8"></polyline>
<polyline points="947.333,801 947.333,827" fill="none" stroke="#4a3a2c" stroke-width="0.8"></polyline>
<polyline points="950.5,801 950.5,827" fill="none" stroke="#4a3a2c" stroke-width="0.8"></polyline>
<polyline points="953.667,801 953.667,827" fill="none" stroke="#4a3a2c" stroke-width="0.8"></polyline>
<polyline points="956.833,801 956.833,827" fill="none" stroke="#4a3a2c" stroke-width="0.8"></polyline>
<polyline points="960,801 960,827" fill="none" stroke="#4a3a2c" stroke-width="0.8"></polyline>
<polyline points="922,801 960,801" fill="none" stroke="#4a3a2c" stroke-width="0.8"></polyline>
<polyline points="922,804.25 960,804.25" fill="none" stroke="#4a3a2c" stroke-width="0.8"></polyline>
<polyline points="922,807.5 960,807.5" fill="none" stroke="#4a3a2c" stroke-width="0.8"></polyline>
<polyline points="922,810.75 960,810.75" fill="none" stroke="#4a3a2c" stroke-width="0.8"></polyline>
<polyline points="922,814 960,814" fill="none" stroke="#4a3a2c" stroke-width="0.8"></polyline>
<polyline points="922,817.25 960,817.25" fill="none" stroke="#4a3a2c" stroke-width="0.8"></polyline>
<polyline points="922,820.5 960,820.5" fill="none" stroke="#4a3a2c" stroke-width="0.8"></polyline>
<polyline points="922,823.75 960,823.75" fill="none" stroke="#4a3a2c" stroke-width="0.8"></polyline>
<polyline points="922,827 960,827" fill="none" stroke="#4a3a2c" stroke-width="0.8"></polyline>
<polygon points="922.5,813 942,813 942,824 922.5,824" fill="none" stroke="#20160e" stroke-width="1.3"></polygon>
<polyline points="896,815 897,849" fill="none" stroke="#786049" stroke-width="1.9"></polyline>
<polyline points="903,815 904.5,850" fill="none" stroke="#786049" stroke-width="1.9"></polyline>
<polyline points="911,815 912,850" fill="none" stroke="#786049" stroke-width="1.9"></polyline>
<polyline points="890,812 960,811" fill="none" stroke="#786049" stroke-width="1.9"></polyline>
<polyline points="912,831 922,831" fill="none" stroke="#786049" stroke-width="1.9"></polyline>
<polyline points="960,829 999,828" fill="none" stroke="#786049" stroke-width="1.9"></polyline>
<polyline points="979,829.5 980,848" fill="none" stroke="#786049" stroke-width="1.9"></polyline>
<polyline points="988,820 989,829" fill="none" stroke="#786049" stroke-width="1.9"></polyline>
<polyline points="884,826 896,826" fill="none" stroke="#786049" stroke-width="1.9"></polyline>
</g>
<polygon points="807.2,800 884,800 884.6,852.5 808.6,855" fill="#c4d163" stroke="#1a1a1a" stroke-width="1.4"></polygon>
<path d="M817 801 C819 806 822 809 824 808 L826 801 M808 816 L822 816 C826 824 828 830 830 837 L808 837.500 M808 849 L836 847.500 L836.500 853.500 L808.600 854.500 M829 801 C850 800 860 806 862 814 C862 828 856 834 840 846 L842 853.800 M862 814 L884 813.500 M856 802 L859 810" fill="none" stroke="#1a1a1a" stroke-width="1.400"></path>
<polygon points="814,817 822,816.5 829,836.5 814,837" fill="#bcc650" stroke="none" stroke-width="1"></polygon>
<polygon points="910.2,801 930.7,801 930.7,813.5 910.2,813.5" fill="#c4d163" stroke="#1a1a1a" stroke-width="1.4"></polygon>
<polygon points="918,805 928,804.5 929,811 918,811.5" fill="none" stroke="#1a1a1a" stroke-width="1.2"></polygon>
<polygon points="960.9,801 1004.7,801 1004.7,809.6 960.9,809.6" fill="#c4d163" stroke="#1a1a1a" stroke-width="1.4"></polygon>
<polygon points="983.3,800 1035,800 1036.9,809.6 1024.2,818.4 1021.3,827.2 1004.7,828.1 1005.7,847.6 998.9,847.6 997.9,830 989.1,812.5" fill="#c4d163" stroke="#1a1a1a" stroke-width="1.4"></polygon>
<path d="M990 801 L993 808 L1001 807 L1004 816 L1004.700 828 M996 801 L1004 816 M1008 806 L1015 804 L1017.500 812 L1010 815 Z M999 838.500 L1005.500 838.500 M1001 843 L1001 847.500" fill="none" stroke="#1a1a1a" stroke-width="1.300"></path>
<polyline points="880,800 880,852" fill="none" stroke="#1a1a1a" stroke-width="1.2"></polyline>
<polygon points="876,800 884,800 884.6,852.5 876,852.8" fill="#c4d163" stroke="none" stroke-width="1"></polygon>
<polyline points="884,800 884.6,852.5" fill="none" stroke="#1a1a1a" stroke-width="1.4"></polyline>
<path d="M1035 800 C1035.3 801.6 1038.7 806.5 1036.9 809.6 C1035.1 812.7 1026.6 816.0 1024.2 818.4 C1021.8 820.8 1021.6 821.9 1022.3 824.2 C1022.9 826.5 1024.8 829.2 1028.1 832.0 C1031.3 834.8 1037.9 837.2 1041.8 840.8 C1045.7 844.4 1049.1 848.5 1051.5 853.5 C1053.9 858.5 1055.6 865.5 1056.4 871.0 C1057.2 876.5 1056.9 881.7 1056.4 886.6 C1055.9 891.5 1053.5 896.5 1053.5 900.2 C1053.5 903.9 1054.5 906.5 1056.4 909.0 C1058.3 911.5 1063.3 912.8 1065.1 914.9 C1066.9 917.0 1068.1 919.3 1067.1 921.7 C1066.1 924.1 1061.6 926.6 1059.3 929.5 C1057.0 932.4 1054.2 936.6 1053.5 939.2 C1052.8 941.8 1053.5 944.7 1055.4 945.0 C1057.3 945.3 1062.0 942.7 1065.1 941.2 C1068.2 939.8 1072.3 936.5 1073.9 936.3 C1075.5 936.1 1075.6 937.8 1074.9 940.2 C1074.2 942.7 1070.8 947.9 1070.0 951.0 C1069.2 954.1 1068.9 956.4 1070.0 958.7 C1071.1 961.0 1074.8 964.1 1076.8 964.6 C1078.8 965.1 1081.1 962.4 1082.0 962.0" fill="none" stroke="#111" stroke-width="1.700" stroke-linejoin="round"></path>
<polyline points="1056.4,909 1065.1,914.9 1067.1,921.7" fill="none" stroke="#5aa8d8" stroke-width="1" transform="translate(-1.2,1)"></polyline>
<polyline points="1055.4,945 1065.1,941.2 1073.9,936.3" fill="none" stroke="#5aa8d8" stroke-width="1" transform="translate(0.3,1.3)"></polyline>
<polyline points="1070,958.7 1076.8,964.6" fill="none" stroke="#5aa8d8" stroke-width="1" transform="translate(-1,1)"></polyline>
<circle cx="887.8" cy="814.5" r="2.9" fill="#e89c82" stroke="#8f6652" stroke-width="1.3"></circle>
<circle cx="886.8" cy="851.5" r="2.9" fill="#e89c82" stroke="#8f6652" stroke-width="1.3"></circle>
<circle cx="894.6" cy="851.5" r="2.9" fill="#e89c82" stroke="#8f6652" stroke-width="1.3"></circle>
<circle cx="901.4" cy="851.5" r="2.9" fill="#e89c82" stroke="#8f6652" stroke-width="1.3"></circle>
<circle cx="886.8" cy="861.8" r="2.9" fill="#e89c82" stroke="#8f6652" stroke-width="1.3"></circle>
<circle cx="931.6" cy="850.2" r="2.9" fill="#e89c82" stroke="#8f6652" stroke-width="1.3"></circle>
<circle cx="942.4" cy="848.6" r="2.9" fill="#e89c82" stroke="#8f6652" stroke-width="1.3"></circle>
<circle cx="952.1" cy="848.6" r="2.9" fill="#e89c82" stroke="#8f6652" stroke-width="1.3"></circle>
<circle cx="961.9" cy="848.6" r="2.9" fill="#e89c82" stroke="#8f6652" stroke-width="1.3"></circle>
<circle cx="942" cy="841.8" r="2.9" fill="#e89c82" stroke="#8f6652" stroke-width="1.3"></circle>
<circle cx="942" cy="836" r="2.9" fill="#e89c82" stroke="#8f6652" stroke-width="1.3"></circle>
<circle cx="942" cy="825.2" r="2.9" fill="#e89c82" stroke="#8f6652" stroke-width="1.3"></circle>
<circle cx="941.4" cy="811.6" r="2.9" fill="#e89c82" stroke="#8f6652" stroke-width="1.3"></circle>
<circle cx="994.4" cy="846.6" r="2.9" fill="#e89c82" stroke="#8f6652" stroke-width="1.3"></circle>
<circle cx="1036.9" cy="846" r="2.9" fill="#e89c82" stroke="#8f6652" stroke-width="1.3"></circle>
<circle cx="1033" cy="846" r="2.9" fill="#e89c82" stroke="#8f6652" stroke-width="1.3"></circle>
<circle cx="887" cy="843" r="2.9" fill="#e89c82" stroke="#8f6652" stroke-width="1.3"></circle>
<circle cx="887" cy="835" r="2.9" fill="#e89c82" stroke="#8f6652" stroke-width="1.3"></circle>
<circle cx="683.5" cy="188.9" r="3.6" fill="#cdb79d" stroke="#1a1a1a" stroke-width="1.3"></circle>
<circle cx="682.4" cy="195.4" r="3.6" fill="#cdb79d" stroke="#1a1a1a" stroke-width="1.3"></circle>
<circle cx="692" cy="203.8" r="3.6" fill="#cdb79d" stroke="#1a1a1a" stroke-width="1.3"></circle>
<circle cx="689.6" cy="211.4" r="3.6" fill="#cdb79d" stroke="#1a1a1a" stroke-width="1.3"></circle>
<circle cx="416" cy="492" r="7.2" fill="#ececec" stroke="none" stroke-width="0"></circle>
<circle cx="416" cy="490.5" r="3.3" fill="#d8c8b4" stroke="#1a1a1a" stroke-width="1.2"></circle>
<circle cx="412.8" cy="491.8" r="3.2" fill="none" stroke="#1a1a1a" stroke-width="1.1"></circle>
<circle cx="419.2" cy="491.8" r="3.2" fill="none" stroke="#1a1a1a" stroke-width="1.1"></circle>
<circle cx="416" cy="495.8" r="2.6" fill="#f4f4f4" stroke="#1a1a1a" stroke-width="1.2"></circle>
<polygon points="689.4,234.8 817.4,228.3 811,246 689.4,246" fill="#b8946b" stroke="#1a1a1a" stroke-width="1.3"></polygon>
<circle cx="703" cy="240" r="2.3" fill="none" stroke="#9a7a55" stroke-width="1"></circle>
<polyline points="773,231 773,246" fill="none" stroke="#c2a078" stroke-width="1"></polyline>
<polyline points="753,232 753,246" fill="none" stroke="#bf9d74" stroke-width="1"></polyline>
</svg>
<!-- canvas overlays (coords relative to canvas 7,166) -->
<div class="abs" style="left:0;top:0;width:1513px;height:1px;background:#fff"></div>
<div class="abs" style="left:0;top:0;width:1px;height:853px;background:#fff"></div>
<svg class="abs" style="left:1454px;top:8px" width="54" height="14" viewBox="0 0 54 14" fill="none" stroke="#4a4a4a" stroke-width="1.200">
 <rect x="2.500" y="6.500" width="10" height="3.500" rx="1" fill="#e8e8e8"></rect>
 <rect x="23.500" y="1.500" width="8" height="8" fill="#e8e8e8"></rect><rect x="21.500" y="3.500" width="8" height="8" fill="#e8e8e8"></rect><rect x="24" y="6" width="3" height="3"></rect>
 <path d="M40.500 2.500 h3 l2 2.500 l2 -2.500 h3 l-3.500 4.500 l3.500 4.500 h-3 l-2 -2.500 l-2 2.500 h-3 l3.500 -4.500z" fill="#e8e8e8"></path>
</svg>
<!-- UCS icon -->
<svg class="abs" style="left:10px;top:766px" width="80" height="76" viewBox="0 0 80 76" fill="none" stroke="#222" stroke-width="1.200">
 <path d="M9.500 20 v46 M9.500 66.500 h47"></path><rect x="5.500" y="62.500" width="8.500" height="8.500"></rect>
 <path d="M10.500 6.500 l5.500 6 l5.500 -6 M16 12.500 v5.500"></path><path d="M59.500 55 l11 11 M70.500 55 l-11 11"></path>
</svg>
<!-- command line -->
<div class="abs" style="left:303px;top:828px;width:52px;height:25px;background:#5b606c;border-radius:3px 0 0 0"></div>
<svg class="abs" style="left:303px;top:828px" width="52" height="25" viewBox="0 0 52 25"><g fill="#e6e6e6"><rect x="3.500" y="5" width="1.300" height="1.300"></rect><rect x="6" y="5" width="1.300" height="1.300"></rect><rect x="3.500" y="8" width="1.300" height="1.300"></rect><rect x="6" y="8" width="1.300" height="1.300"></rect><rect x="3.500" y="11" width="1.300" height="1.300"></rect><rect x="6" y="11" width="1.300" height="1.300"></rect><rect x="3.500" y="14" width="1.300" height="1.300"></rect><rect x="6" y="14" width="1.300" height="1.300"></rect><rect x="3.500" y="17" width="1.300" height="1.300"></rect><rect x="6" y="17" width="1.300" height="1.300"></rect><rect x="3.500" y="20" width="1.300" height="1.300"></rect><rect x="6" y="20" width="1.300" height="1.300"></rect></g>
 <path d="M13.500 9 l7 7 M20.500 9 l-7 7" stroke="#f2f2f2" stroke-width="1.600"></path>
 <path d="M33 20 l8 -8" stroke="#f2f2f2" stroke-width="2.200" stroke-linecap="round"></path><path d="M40 6 a4 4 0 1 0 5 5 l-2.500 0.500 l-2 -2z" fill="#f2f2f2"></path></svg>
<div class="abs" style="left:354px;top:828px;width:857px;height:25px;background:linear-gradient(rgba(246,246,246,0.720),rgba(246,246,246,0.940));border:1px solid #7e7e7e;border-bottom:none;border-radius:0 3px 0 0"></div>
<svg class="abs" style="left:358px;top:834px" width="22" height="13" viewBox="0 0 22 13"><rect x="0.500" y="0.500" width="14" height="11" fill="#f4f4f4" stroke="#8c8c8c"></rect><rect x="0.500" y="0.500" width="14" height="2.500" fill="#8c8c8c"></rect><path d="M2.500 5.500 l2 1.500 l-2 1.500 M6 9 h5" stroke="#666" stroke-width="0.900" fill="none"></path><path d="M16.500 4.500 h5 l-2.500 3z" fill="#666"></path></svg>
<div class="t" style="left: 388px; top: 835px; font-family: &quot;Liberation Mono&quot;, monospace; font-style: italic; font-size: 11.5px; color: rgb(138, 138, 138); letter-spacing: -0.19px;">Type a command</div>
<svg class="abs" style="left:1196px;top:837px" width="10" height="7" viewBox="0 0 10 7"><path d="M1 5.500 h8 l-4 -4z" fill="#8a8a8a"></path></svg>
</div>
<div class="abs" id="rightbg"></div>
<div class="abs" id="statusbar"></div>
<div class="abs" id="bottomstrip"></div>


<!-- ===== title bar ===== -->
<svg class="abs" style="left:14px;top:8px" width="26" height="32" viewBox="0 0 26 32">
 <path d="M1 23 L9 2 L15 2 L21 23 L16 23 L12.2 9 L9.5 17 L13 17 L14 20.5 L8.3 20.5 L7.2 23Z" fill="#d42a2a"></path>
 <path d="M9 2 L12 2 L4 23 L1 23Z" fill="#e8504a"></path>
 <text x="6" y="31" font-family="Liberation Sans" font-weight="bold" font-size="7.5" fill="#d42a2a">M3D</text>
</svg>
<!-- QAT icons -->
<svg class="abs" style="left:50px;top:8px" width="410" height="18" viewBox="0 0 410 18">
 <!-- new -->
 <path d="M1 2 h11 l4 4 v9 h-15z" fill="#e4e4e4"></path><path d="M12 2 v4 h4z" fill="#9aa0a8"></path>
 <!-- open -->
 <path d="M23 3 h5 l1.5 2 h7 v3 h-10 l-3.5 7z" fill="#e4e4e4"></path><path d="M27 9 h12 l-4 6.5 h-12z" fill="#d0d0d0"></path>
 <!-- save -->
 <rect x="46" y="1.5" width="15" height="14.5" rx="1" fill="#dedede"></rect><rect x="49" y="1.5" width="9" height="5" fill="#5a6270"></rect><rect x="50" y="10" width="8" height="6" fill="#5a6270"></rect><rect x="51" y="11.5" width="3" height="3" fill="#eee"></rect>
 <!-- saveas -->
 <rect x="68" y="1.5" width="14" height="13" rx="1" fill="#dedede"></rect><rect x="71" y="1.5" width="8" height="4.5" fill="#5a6270"></rect><rect x="71" y="9.5" width="7" height="5" fill="#5a6270"></rect><path d="M78 14 l6 -7 l2 2 l-6 7 l-3 1z" fill="#e4a43c"></path>
 <!-- open sheet -->
 <rect x="92" y="1.5" width="9" height="14" rx="1" fill="#cfcfcf"></rect><rect x="93.5" y="3" width="6" height="10" fill="#707784"></rect><path d="M98 11 h3 l1 1 h4 v5 h-8z" fill="#e8c04a"></path>
 <!-- publish -->
 <rect x="117" y="1.5" width="9" height="14.5" rx="1" fill="#cfcfcf"></rect><rect x="118.500" y="3.500" width="6" height="10" fill="#5f6775"></rect><path d="M113 6 h6 v-2 l4 3.200 l-4 3.200 v-2 h-6z" fill="#3ba4dc"></path>
 <!-- print -->
 <rect x="139" y="1" width="10" height="5" fill="#e4e4e4"></rect><rect x="135.500" y="5" width="16" height="8" rx="1" fill="#e4e4e4"></rect><rect x="138.500" y="10.500" width="10" height="6" fill="#fff"></rect><rect x="139.500" y="12" width="8" height="2.500" fill="#4aa8e0"></rect>
 <!-- undo -->
 <path d="M159 8 l7.500 -5.500 v3.500 c5 0 8.500 2 9 7 c-2 -3 -5 -3.500 -9 -3.500 v3.500z" fill="#f0f0f0"></path>
 <path d="M178.500 7.500 h6 l-3 3.500z" fill="#e0e0e0"></path>
 <!-- redo -->
 <path d="M207.500 8 l-7.500 -5.500 v3.500 c-5 0 -8.500 2 -9 7 c2 -3 5 -3.500 9 -3.500 v3.500z" fill="#727a88"></path>
 <path d="M212.500 7.500 h6 l-3 3.500z" fill="#8a91a0"></path>
</svg>
<div class="abs" style="left:274px;top:7px;width:166px;height:19px;background:#39414f"></div>
<svg class="abs" style="left:275px;top:8px" width="18" height="18" viewBox="0 0 18 18">
 <g fill="#f2f2f2"><circle cx="9" cy="9" r="5.600"></circle>
 <g id="gt"><rect x="7.400" y="0.800" width="3.200" height="16.400" rx="0.600"></rect></g>
 <rect x="7.400" y="0.800" width="3.200" height="16.400" rx="0.600" transform="rotate(45 9 9)"></rect>
 <rect x="7.400" y="0.800" width="3.200" height="16.400" rx="0.600" transform="rotate(90 9 9)"></rect>
 <rect x="7.400" y="0.800" width="3.200" height="16.400" rx="0.600" transform="rotate(135 9 9)"></rect></g>
 <circle cx="9" cy="9" r="2.300" fill="#39414f"></circle>
</svg>
<div class="t" style="left: 293px; top: 11px; font-size: 12px; color: rgb(242, 242, 242); letter-spacing: -0.55px;">Planning and Analysis W...</div>
<svg class="abs" style="left:430px;top:13px" width="24" height="8" viewBox="0 0 24 8"><path d="M1 2 h8 l-4 4.500z" fill="#f0f0f0"></path><path d="M13.500 0.500 h8 v1.600 h-8z M13.500 3.200 h8 l-4 4z" fill="#f0f0f0"></path></svg>
<div class="t" style="left: 726px; top: 11px; font-size: 12px; color: rgb(242, 242, 242); letter-spacing: -0.47px;">Autodesk AutoCAD Map 3D 2021</div>
<!-- search -->
<svg class="abs" style="left:1382px;top:12px" width="7" height="10" viewBox="0 0 7 10"><path d="M1 1 l5 4 l-5 4z" fill="#f0f0f0"></path></svg>
<div class="abs" style="left:1394px;top:7px;width:166px;height:19px;background:#4a5364"></div>
<div class="t" style="left: 1396px; top: 11px; font-size: 11.5px; font-style: italic; color: rgb(201, 206, 214); letter-spacing: -0.8px;">Type a keyword or phrase</div>
<svg class="abs" style="left:1563px;top:8px" width="18" height="18" viewBox="0 0 18 18"><circle cx="7.500" cy="7" r="5" fill="none" stroke="#f0f0f0" stroke-width="1.500"></circle><path d="M11 10.500 l4.500 4.500" stroke="#d9b48a" stroke-width="1.800"></path></svg>
<svg class="abs" style="left:1586px;top:8px" width="17" height="17" viewBox="0 0 17 17"><ellipse cx="8.500" cy="5.500" rx="3.600" ry="4.300" fill="#eeeeee"></ellipse><path d="M1 15.500 c0.500 -4 3 -5.500 7.500 -5.500 s7 1.500 7.500 5.500z" fill="#f4f4f4"></path></svg>
<div class="t" style="left: 1607px; top: 11px; font-size: 12px; color: rgb(242, 242, 242); letter-spacing: -0.48px;">Sign In</div>
<svg class="abs" style="left:1684px;top:8px" width="120" height="18" viewBox="0 0 120 18">
 <path d="M1.500 7 h5 l-2.500 3z" fill="#e0e0e0"></path>
 <!-- cart -->
 <path d="M18 2.500 h2.500 l1 2 h8.500 l-1.500 6 h-7z" fill="#b8bcc2"></path><path d="M18 2.500 h2.500 l2.500 9 h7" fill="none" stroke="#e8e8e8" stroke-width="1.200"></path><circle cx="23.500" cy="14" r="1.300" fill="#e8e8e8"></circle><circle cx="28.500" cy="14" r="1.300" fill="#e8e8e8"></circle>
 <!-- a360 -->
 <path d="M45.500 3.500 L39.500 14 h12z" fill="none" stroke="#f2f2f2" stroke-width="1.800" stroke-linejoin="round"></path><circle cx="45.500" cy="3.200" r="1.700" fill="#f2f2f2"></circle><circle cx="39.300" cy="14" r="1.700" fill="#f2f2f2"></circle><circle cx="51.700" cy="14" r="1.700" fill="#f2f2f2"></circle>
 <path d="M59 7 h5 l-2.500 3z" fill="#e0e0e0"></path>
 <rect x="73" y="1" width="1" height="16" fill="#4a5262"></rect>
 <circle cx="89.500" cy="8.500" r="7.500" fill="#e8e8e8"></circle>
 <text x="86.200" y="12.500" font-family="Liberation Sans" font-weight="bold" font-size="11" fill="#6a6a6a">?</text>
 <path d="M104.500 7 h5 l-2.500 3z" fill="#e0e0e0"></path>
</svg>
<svg class="abs" style="left:1856px;top:8px" width="64" height="18" viewBox="0 0 64 18">
 <rect x="4" y="11" width="8" height="2.200" fill="#f4f4f4"></rect>
 <path d="M28.500 3.500 h8 v6 h-2" fill="none" stroke="#f4f4f4" stroke-width="1.300"></path><rect x="25.500" y="6.500" width="8.500" height="6.500" fill="#222933" stroke="#f4f4f4" stroke-width="1.300"></rect><rect x="25.500" y="6.500" width="8.500" height="2" fill="#f4f4f4"></rect>
 <path d="M49.500 4 l10 10 M59.500 4 l-10 10" stroke="#f4f4f4" stroke-width="1.600"></path>
</svg>


<!-- ===== menu tabs ===== -->
<div class="abs" style="left:48px;top:31px;width:51px;height:16px;background:#3b4453;border-radius:2px 2px 0 0"></div>
<div class="mt" style="left: 57px; color: rgb(255, 255, 255); letter-spacing: -0.25px;">Home</div>
<div class="mt" style="left: 109px; letter-spacing: -0.34px;">Insert</div>
<div class="mt" style="left: 154px; letter-spacing: -0.26px;">Annotate</div>
<div class="mt" style="left: 221px; letter-spacing: -0.45px;">Feature Edit</div>
<div class="mt" style="left: 298px; letter-spacing: -0.51px;">Create</div>
<div class="mt" style="left: 349px; letter-spacing: -0.39px;">Analyze</div>
<div class="mt" style="left: 406px; letter-spacing: -0.2px;">View</div>
<div class="mt" style="left: 448px; letter-spacing: -0.2px;">Tools</div>
<div class="mt" style="left: 496px; letter-spacing: -0.17px;">Output</div>
<div class="mt" style="left: 548px; letter-spacing: -0.45px;">Map Setup</div>
<div class="mt" style="left: 620px; letter-spacing: -0.17px;">Help</div>
<div class="mt" style="left: 662px; letter-spacing: -0.1px;">Add-ins</div>
<div class="mt" style="left: 719px; letter-spacing: -0.65px;">Express Tools</div>
<div class="mt" style="left: 802px; letter-spacing: -0.39px;">Featured Apps</div>
<svg class="abs" style="left:902px;top:33px" width="26" height="9" viewBox="0 0 26 9"><rect x="1" y="1" width="13" height="7" rx="1" fill="#e8e8e8"></rect><path d="M5 5.500 h5 l-2.500 -3z" fill="#222933"></path><path d="M18.500 3.500 h5 l-2.500 3z" fill="#e0e0e0"></path></svg>


<!-- ===== ribbon ===== -->
<style>
.rt{position:absolute;white-space:nowrap;line-height:1;font-size:11.500px;color:#717a89}
.ic{position:absolute}
.dd{position:absolute;background:#485163;border:1px solid #3e4757}
</style>
<!-- panel separators -->
<div class="psep" style="left:122px;height:68px"></div>
<div class="psep" style="left:194px;height:68px"></div>
<div class="psep" style="left:309px"></div>
<div class="psep" style="left:378px;height:68px"></div>
<div class="psep" style="left:445px"></div>
<div class="psep" style="left:605px"></div>
<div class="psep" style="left:789px"></div>
<div class="psep" style="left:1004px"></div>
<div class="psep" style="left:1197px"></div>
<!-- Data panel -->
<svg class="ic" style="left:16px;top:52px" width="34" height="34" viewBox="0 0 34 34" fill="#6d7685">
 <ellipse cx="14" cy="6" rx="13" ry="5"></ellipse><path d="M1 8.500 c2 4 24 4 26 0 v6 c-2 4.500 -24 4.500 -26 0z"></path><path d="M1 17 c2 4 24 4 26 0 v6.500 c-2 5 -24 5 -26 0z"></path>
 <path d="M24 20 h4 v4 h4 v4 h-4 v4 h-4 v-4 h-4 v-4 h4z" fill="#78818f"></path>
</svg>
<div class="rt" style="left: 12px; top: 89px; letter-spacing: -0.41px;">Connect</div>
<svg class="ic" style="left:58px;top:53px" width="18" height="17" viewBox="0 0 18 17" fill="#6d7685"><ellipse cx="6.500" cy="3" rx="6" ry="2.600"></ellipse><path d="M0.500 4.500 c1 2 11 2 12 0 v3 c-1 2 -11 2 -12 0z M0.500 9 c1 2 11 2 12 0 v3 c-1 2 -11 2 -12 0z"></path><path d="M8 7.500 h9.500 l-3.500 4 v4.500 l-2.500 -1 v-3.500z" fill="#78818f"></path></svg>
<div class="rt" style="left: 79px; top: 57px; letter-spacing: -0.26px;">Filter</div>
<svg class="ic" style="left:58px;top:77px" width="18" height="17" viewBox="0 0 18 17" fill="#6d7685"><path d="M7.500 1 l4 6 h-8z"></path><circle cx="4" cy="9" r="3.500"></circle><rect x="1" y="12.500" width="8" height="2.500"></rect><circle cx="12" cy="11" r="2.800" fill="none" stroke="#6d7685" stroke-width="1.400"></circle><path d="M14 13 l2.500 2.500" stroke="#6d7685" stroke-width="1.500"></path></svg>
<div class="rt" style="left: 79px; top: 80px; letter-spacing: -0.57px;">Search</div>
<svg class="ic" style="left:59px;top:100px" width="16" height="15" viewBox="0 0 16 15"><rect x="0.700" y="1.200" width="14" height="12" fill="none" stroke="#6d7685" stroke-width="1.300"></rect><path d="M1 4.500 h14 M1 7.500 h14 M1 10.500 h14 M5.500 4.500 v9 M10 4.500 v9" stroke="#6d7685" stroke-width="1"></path></svg>
<div class="rt" style="left: 79px; top: 103px; letter-spacing: -0.5px;">Table</div>
<svg class="ic" style="left:134px;top:52px" width="28" height="32" viewBox="0 0 28 32" fill="#6d7685"><path d="M1 1 h13 l8 8 v20 h-21z"></path><path d="M14 1 v8 h8z" fill="#808997"></path><path d="M1 9 h21 M1 16 h21 M1 23 h21 M7 1 v28 M14 9 v20" stroke="#596272" stroke-width="0.800"></path><circle cx="9" cy="19" r="4" fill="none" stroke="#808997" stroke-width="1"></circle><path d="M20 16 c0 -3 5 -3 5 0 v12 c0 3 -5 3 -5 0 v-8" fill="none" stroke="#78818f" stroke-width="1.300"></path></svg>
<div class="rt" style="left: 131px; top: 89px; letter-spacing: -0.1px;">Attach</div>
<svg class="ic" style="left:169px;top:52px" width="18" height="66" viewBox="0 0 18 66" fill="#6d7685">
 <path d="M1 1.500 h14 l-5 6 v6 l-3 -1.500 v-4.500z"></path><path d="M9 15 l6 -7 l2 2 l-6 6.500z" fill="#78818f"></path>
 <rect x="1" y="25" width="13" height="12"></rect><path d="M12 33 h3 v3 h2 l-3.500 4 l-3.500 -4 h2z" fill="#808997"></path>
 <path d="M3 49 h8 l4 4 v12 h-12z"></path><path d="M3 53 h12 M3 58 h12 M8 53 v12" stroke="#505a6a" stroke-width="0.800"></path><path d="M0 51 h5 v-2 l3 3 l-3 3 v-2 h-5z" fill="#808997"></path>
</svg>
<svg class="ic" style="left:240px;top:56px" width="31" height="30" viewBox="0 0 31 30" fill="none" stroke="#6d7685" stroke-width="2"><path d="M3 27 c-3 -12 4 -23 17 -24"></path><path d="M3 27 c3 -9 10 -18 25 -20 M6 12 c6 0 14 4 18 12 M12 5 c-2 6 0 16 4 22 M20 3 c3 0 6 1 8 3 v18 l-6 -1"></path><path d="M5 27 h20" stroke-width="2.500"></path><path d="M10 8 l8 -3 l8 3 v12 l-8 4 l-8 -4z" fill="#6d7685" stroke="none" opacity="0.550"></path></svg>
<div class="rt" style="left: 204px; top: 89px; letter-spacing: -0.23px;">Autodesk Connector</div>
<div class="rt" style="left: 230px; top: 104px; letter-spacing: -0.4px;">for ArcGIS</div>
<div class="ptitle" style="left: 134px; letter-spacing: -0.59px;">Data</div>
<svg class="ic" style="left:163px;top:128px" width="8" height="6" viewBox="0 0 8 6"><path d="M0.500 0.800 h7 l-3.500 4z" fill="#f0f0f0"></path></svg>
<svg class="ic" style="left:299px;top:127px" width="7" height="7" viewBox="0 0 7 7"><path d="M1 1 l4 4 M2.500 6 h3.500 v-3.500" stroke="#8d95a3" stroke-width="1.200" fill="none"></path></svg>
<!-- Online Map panel -->
<svg class="ic" style="left:325px;top:52px" width="34" height="34" viewBox="0 0 34 34"><rect x="1" y="1" width="27" height="27" fill="#6d7685"></rect><rect x="1" y="1" width="15" height="9" fill="#596272"></rect><path d="M16 1 v9 h-15" stroke="#808997" stroke-width="0.800" fill="none"></path><circle cx="25" cy="24" r="7.500" fill="#78818f"></circle><rect x="20.500" y="23" width="9" height="2" fill="#4b5464"></rect></svg>
<div class="rt" style="left: 322px; top: 89px; letter-spacing: 0.04px;">Map Off</div>
<svg class="ic" style="left:339px;top:104px" width="6" height="5" viewBox="0 0 6 5"><path d="M0.500 0.800 h5 l-2.500 3z" fill="#8d95a3"></path></svg>
<svg class="ic" style="left:400px;top:54px" width="30" height="30" viewBox="0 0 30 30"><rect x="1" y="2" width="26" height="26" fill="#6d7685"></rect><path d="M14 0 v14 h-14" stroke="#808997" stroke-width="1" fill="none"></path><path d="M1 14 h13 v-12 h-13z" fill="#626b7a"></path><path d="M8 20 l5 -3 l6 3 l4 -4 v10 h-15z" fill="#7a8391"></path></svg>
<div class="rt" style="left: 393px; top: 89px; letter-spacing: -0.27px;">Capture</div>
<div class="rt" style="left: 402px; top: 104px; letter-spacing: -0.32px;">Area</div>
<svg class="ic" style="left:434px;top:100px" width="6" height="5" viewBox="0 0 6 5"><path d="M0.500 0.800 h5 l-2.500 3z" fill="#8d95a3"></path></svg>
<div class="ptitle" style="left: 349px; letter-spacing: -0.44px;">Online Map</div>
<!-- Draw panel -->
<svg class="ic" style="left:450px;top:54px" width="38" height="30" viewBox="0 0 38 30" fill="none" stroke="#7a8391" stroke-width="1.200"><path d="M3 25 h21 M24 25 c14 -2 14 -18 4 -21"></path><circle cx="3" cy="25" r="1.500" fill="#6d7685"></circle><circle cx="24" cy="25" r="1.500" fill="#6d7685"></circle><circle cx="27" cy="4" r="1.500" fill="#6d7685"></circle></svg>
<div class="rt" style="left: 449px; top: 88px; letter-spacing: -0.16px;">Polyline</div>
<svg class="ic" style="left:494px;top:52px" width="104" height="66" viewBox="0 0 104 66" fill="none" stroke="#7a8391" stroke-width="1.150">
 <path d="M3 16 c0 -8 6 -13 14 -13" stroke-dasharray="3 1.500"></path><path d="M24 8 h5 l-2.500 3z" fill="#8d95a3" stroke="none"></path>
 <path d="M40 16 l14 -13"></path><circle cx="40" cy="16" r="1" fill="#6d7685"></circle><circle cx="54" cy="3" r="1" fill="#6d7685"></circle>
 <path d="M68 3 l6 6.500 l-6 6.500 l-6 -6.500z" fill="#6d7685"></path><rect x="66" y="7.500" width="4" height="4" fill="#3b4453" stroke="none" transform="rotate(45 68 9.500)"></rect>
 <circle cx="9.500" cy="32.500" r="6.500"></circle><path d="M9.500 32.500 l4 -4"></path><path d="M24 31 h5 l-2.500 3z" fill="#8d95a3" stroke="none"></path>
 <rect x="38.500" y="26.500" width="14" height="11"></rect><path d="M68 25 l7 5 l-2.500 8 h-9 l-2.500 -8z"></path><circle cx="68" cy="32" r="1.200" fill="#6d7685"></circle>
 <circle cx="9.500" cy="49.500" r="1" fill="#6d7685"></circle><circle cx="4" cy="55" r="1" fill="#6d7685"></circle><circle cx="15" cy="55" r="1" fill="#6d7685"></circle><circle cx="9.500" cy="61" r="1" fill="#6d7685"></circle><path d="M24 54 h5 l-2.500 3z" fill="#8d95a3" stroke="none"></path>
 <circle cx="45" cy="54" r="6" fill="#6d7685" stroke="none"></circle><path d="M39 54 h12 M45 48 v12" stroke="#3b4453" stroke-width="0.800"></path><rect x="46" y="56" width="8" height="6.500" fill="#808997" stroke="#3b4453" stroke-width="0.800"></rect>
 <path d="M95.500 54 h5 l-2.500 3z" fill="#8d95a3" stroke="none"></path>
</svg>
<div class="rt" style="left: 552px; top: 103px; letter-spacing: -1.2px;">COGO</div>
<div class="ptitle" style="left: 506px; letter-spacing: -0.75px;">Draw</div>
<svg class="ic" style="left:537px;top:128px" width="8" height="6" viewBox="0 0 8 6"><path d="M0.500 0.800 h7 l-3.500 4z" fill="#f0f0f0"></path></svg>
<!-- Modify panel -->
<svg class="ic" style="left:609px;top:51px" width="31" height="33" viewBox="0 0 31 33" fill="#858d9a"><path d="M15.500 1 l5 6 h-3.500 v7.500 h7.500 v-3.500 l6 5 l-6 5 v-3.500 h-7.500 v7.500 h3.500 l-5 6 l-5 -6 h3.500 v-7.500 h-7.500 v3.500 l-6 -5 l6 -5 v3.500 h7.500 v-7.500 h-3.500z"></path></svg>
<div class="rt" style="left: 611px; top: 88px; letter-spacing: -0.28px;">Move</div>
<svg class="ic" style="left:645px;top:52px" width="142" height="66" viewBox="0 0 142 66" fill="none" stroke="#7a8391" stroke-width="1.100">
 <!-- row1 -->
 <circle cx="6" cy="5" r="3.200"></circle><circle cx="6" cy="13" r="3.200"></circle><circle cx="13" cy="13" r="3.200"></circle><path d="M11 3 h4 v4"></path>
 <path d="M37 6 a6.500 6.500 0 1 0 2 5"></path><path d="M33 2 l5 4 l-5 3"></path>
 <path d="M47.500 2 h7 v14 h-7z M54.500 2 l6 14 h-6"></path><path d="M50 13 h5 l-2 -2"></path>
 <rect x="73.500" y="2.500" width="5.500" height="5.500"></rect><rect x="81.500" y="2.500" width="5.500" height="5.500"></rect><rect x="73.500" y="10.500" width="5.500" height="5.500"></rect><rect x="81.500" y="10.500" width="5.500" height="5.500"></rect>
 <rect x="99" y="2" width="8" height="6" fill="#78818f" stroke="none"></rect><rect x="103" y="6" width="9" height="7" fill="#78818f" stroke="#3b4453" stroke-width="0.800"></rect><rect x="107" y="11" width="7" height="5" fill="#78818f" stroke="#3b4453" stroke-width="0.800"></rect><path d="M121.500 8 h5 l-2.500 3z" fill="#8d95a3" stroke="none"></path>
 <!-- row2 -->
 <path d="M7 25 v14 M6 27 l-5 12 h5z M8 27 l5 12 h-5z"></path>
 <path d="M39 27 h-10 a4 4 0 0 0 0 9 h10 M39 30 h-9 a1.500 1.500 0 0 0 0 3 h9"></path>
 <rect x="47.500" y="25.500" width="14" height="14"></rect><rect x="47.500" y="32.500" width="7" height="7"></rect>
 <path d="M70 32 h7 M81 32 h7 M77 29.500 l3 2.500 l-3 2.500z M81 29.500 l-3 2.500 l3 2.500z"></path>
 <path d="M100 38 l8 -11 l6 8" stroke-dasharray="2 1.300"></path><path d="M104 40 v-5 h6 v5"></path>
 <path d="M124 36 l6 -6 M124 36 h8 c6 0 8 -6 3 -9 c-3 -1 -5 0 -6 2"></path>
 <!-- row3 -->
 <path d="M1 54 h11 M9 51 l3 3 l-3 3 M15 48 v13"></path>
 <path d="M29 48 l6 12 M36 48 l-5 12"></path><circle cx="29.500" cy="61" r="2"></circle><circle cx="36" cy="61" r="2"></circle><path d="M25 50 h5"></path>
 <path d="M55 50 h-5 v11 h14 v-11 h-3"></path><path d="M57 48 v4"></path>
 <rect x="73.500" y="50.500" width="15" height="11"></rect><path d="M85 48 v5"></path>
 <path d="M100 61 l3 -5 l8 -8 l2 2 l-8 8z" fill="#6d7685" stroke="none"></path><path d="M99 63.500 h9"></path>
</svg>
<div class="ptitle" style="left: 672px; letter-spacing: 0.28px;">Modify</div>
<svg class="ic" style="left:714px;top:128px" width="8" height="6" viewBox="0 0 8 6"><path d="M0.500 0.800 h7 l-3.500 4z" fill="#f0f0f0"></path></svg>
<!-- AutoCAD Layers panel -->
<svg class="ic" style="left:791px;top:52px" width="192" height="20" viewBox="0 0 192 20" fill="#78818f">
 <g id="stk"><path d="M2 6 l10 -4 l5 2 l-10 4z M2 9.500 l10 -4 l5 2 l-10 4z M2 13 l10 -4 l5 2 l-10 4z"></path></g>
 <rect x="10" y="9" width="7" height="9" fill="#8d95a3" stroke="#3b4453" stroke-width="0.800"></rect>
 <path d="M29 8 l10 -4 l5 2 l-10 4z M29 11.500 l10 -4 l5 2 l-10 4z M29 15 l10 -4 l5 2 l-10 4z"></path><circle cx="37" cy="5" r="2.500" fill="#8d95a3"></circle>
 <path d="M54 5 l10 -4 l5 2 l-10 4z M54 8.500 l10 -4 l5 2 l-10 4z M54 12 l10 -4 l5 2 l-10 4z"></path><path d="M61 17 l6 -5 M67 12 v4 M67 12 h-4" stroke="#8d95a3" stroke-width="1.200" fill="none"></path>
 <path d="M77 5 l10 -4 l5 2 l-10 4z M77 8.500 l10 -4 l5 2 l-10 4z M77 12 l10 -4 l5 2 l-10 4z"></path><path d="M85 17 l6 -5 M91 12 v4 M91 12 h-4" stroke="#8d95a3" stroke-width="1.200" fill="none"></path>
 <path d="M102 7 l10 -4 l6 2 l-10 4z"></path><path d="M109 11 v6 M106 13 l6 3 M112 13 l-6 3" stroke="#78818f" stroke-width="1"></path>
 <path d="M125 7 l10 -4 l6 2 l-10 4z"></path><circle cx="136" cy="12.500" r="2.500"></circle><rect x="135" y="15" width="2.400" height="3"></rect>
 <path d="M150 5 l10 -4 l5 2 l-10 4z M150 8.500 l10 -4 l5 2 l-10 4z M150 12 l10 -4 l5 2 l-10 4z"></path><path d="M160 10 l5 3 l-2 5 l-4 -3z" fill="#8d95a3"></path>
 <path d="M174 7 l10 -4 l5 2 l-10 4z M174 10.500 l10 -4 l5 2 l-10 4z M174 14 l10 -4 l5 2 l-10 4z M174 17.500 l10 -4 l5 2 l-10 4z"></path><path d="M174 3 h6 M174 3 l3 -2 M174 3 l3 2" stroke="#78818f" stroke-width="1" fill="none"></path>
</svg>
<div class="dd" style="left:791px;top:75px;width:185px;height:20px"></div>
<div class="rt" style="left: 793px; top: 80px; color: rgb(128, 137, 151); letter-spacing: -0.44px;">Unsaved Layer State</div>
<svg class="ic" style="left:965px;top:82px" width="9" height="6" viewBox="0 0 9 6"><path d="M0.500 0.800 h8 l-4 4.200z" fill="#c6cbd3"></path></svg>
<svg class="ic" style="left:983px;top:77px" width="18" height="17" viewBox="0 0 18 17" fill="#78818f"><path d="M1 5 l9 -4 l5 2 l-9 4z M1 8.500 l9 -4 l5 2 l-9 4z M1 12 l9 -4 l5 2 l-9 4z"></path><rect x="8" y="8" width="9" height="8" fill="#8d95a3" stroke="#3b4453" stroke-width="0.800"></rect><rect x="10" y="11" width="2" height="3" fill="#3b4453"></rect><rect x="13" y="11" width="2" height="3" fill="#3b4453"></rect></svg>
<div class="dd" style="left:791px;top:98px;width:185px;height:20px"></div>
<svg class="ic" style="left:794px;top:99px" width="72" height="18" viewBox="0 0 72 18">
 <circle cx="7" cy="7" r="4.800" fill="#c9a85c"></circle><rect x="5" y="11.500" width="4" height="4" fill="#9a9fa8"></rect>
 <circle cx="26" cy="8.500" r="4.200" fill="#c9a85c"></circle><path d="M26 1.500 v14 M19 8.500 h14 M21 3.500 l10 10 M31 3.500 l-10 10" stroke="#c9a85c" stroke-width="1.300"></path>
 <rect x="39.500" y="8" width="9" height="8" fill="#b7974f"></rect><path d="M45 8 v-3 a3 3 0 0 1 6 0 v1" stroke="#c9a85c" stroke-width="1.600" fill="none"></path>
 <rect x="55" y="2" width="14" height="14" fill="#222933"></rect>
</svg>
<div class="rt" style="left:867px;top:103px">0</div>
<svg class="ic" style="left:965px;top:105px" width="9" height="6" viewBox="0 0 9 6"><path d="M0.500 0.800 h8 l-4 4.200z" fill="#c6cbd3"></path></svg>
<div class="ptitle" style="left: 850px; letter-spacing: -0.6px;">AutoCAD Layers</div>
<svg class="ic" style="left:934px;top:128px" width="8" height="6" viewBox="0 0 8 6"><path d="M0.500 0.800 h7 l-3.500 4z" fill="#f0f0f0"></path></svg>
<!-- Properties panel -->
<div class="ic" style="left:1009px;top:54px;width:16px;height:16px;border-radius:50%;background:conic-gradient(#f5a623 0 60deg,#f0584a 60deg 120deg,#b05ad6 120deg 180deg,#3a7be0 180deg 240deg,#35c0d8 240deg 300deg,#5ec65a 300deg 360deg)"></div>
<div class="dd" style="left:1027px;top:52px;width:167px;height:20px"></div>
<div class="ic" style="left:1037px;top:55px;width:15px;height:15px;background:#222933;border:1px solid #667083"></div>
<div class="rt" style="left: 1061px; top: 57px; color: rgb(164, 172, 184); letter-spacing: -0.6px;">ByLayer</div>
<svg class="ic" style="left:1184px;top:59px" width="9" height="6" viewBox="0 0 9 6"><path d="M0.500 0.800 h8 l-4 4.200z" fill="#c6cbd3"></path></svg>
<svg class="ic" style="left:1009px;top:76px" width="16" height="17" viewBox="0 0 16 17" fill="#dfe2e6"><rect y="1" width="16" height="1.200"></rect><rect y="4.500" width="16" height="2"></rect><rect y="8.700" width="16" height="2.600"></rect><rect y="13" width="16" height="3.300"></rect></svg>
<div class="dd" style="left:1027px;top:75px;width:167px;height:20px"></div>
<div class="ic" style="left:1030px;top:84px;width:60px;height:1px;background:#8d95a3"></div>
<div class="rt" style="left: 1091px; top: 80px; color: rgb(125, 134, 148); letter-spacing: -0.6px;">ByLayer</div>
<svg class="ic" style="left:1184px;top:82px" width="9" height="6" viewBox="0 0 9 6"><path d="M0.500 0.800 h8 l-4 4.200z" fill="#c6cbd3"></path></svg>
<svg class="ic" style="left:1009px;top:100px" width="16" height="14" viewBox="0 0 16 14" stroke="#8d95a3" stroke-width="1"><path d="M0 1.500 h16" stroke-dasharray="1 1"></path><path d="M0 4.500 h16" stroke-dasharray="3 1"></path><path d="M0 7.500 h16"></path><path d="M0 10.500 h16" stroke-dasharray="2 1"></path><path d="M0 13 h16" stroke-dasharray="1 1"></path></svg>
<div class="dd" style="left:1027px;top:97px;width:167px;height:20px"></div>
<div class="ic" style="left:1030px;top:107px;width:60px;height:1px;background:#8d95a3"></div>
<div class="rt" style="left: 1091px; top: 103px; color: rgb(125, 134, 148); letter-spacing: -0.6px;">ByLayer</div>
<svg class="ic" style="left:1184px;top:105px" width="9" height="6" viewBox="0 0 9 6"><path d="M0.500 0.800 h8 l-4 4.200z" fill="#c6cbd3"></path></svg>
<div class="ptitle" style="left: 1063px; letter-spacing: -0.37px;">Properties</div>
<svg class="ic" style="left:1118px;top:128px" width="8" height="6" viewBox="0 0 8 6"><path d="M0.500 0.800 h7 l-3.500 4z" fill="#f0f0f0"></path></svg>
<svg class="ic" style="left:1186px;top:127px" width="7" height="7" viewBox="0 0 7 7"><path d="M1 1 l4 4 M2.500 6 h3.500 v-3.500" stroke="#8d95a3" stroke-width="1.200" fill="none"></path></svg>
<!-- Clipboard panel -->
<svg class="ic" style="left:1208px;top:51px" width="28" height="34" viewBox="0 0 28 34" fill="#6d7685"><rect x="7" y="1" width="8" height="4" rx="1"></rect><path d="M1 4 h20 v8 h-12 v18 h-8z"></path><path d="M9 12 h11 l5 5 v15 h-16z" fill="#78818f"></path><path d="M20 12 v5 h5z" fill="#8d95a3"></path></svg>
<div class="rt" style="left: 1209px; top: 88px; letter-spacing: -0.68px;">Paste</div>
<svg class="ic" style="left:1219px;top:104px" width="6" height="5" viewBox="0 0 6 5"><path d="M0.500 0.800 h5 l-2.500 3z" fill="#8d95a3"></path></svg>
<svg class="ic" style="left:1248px;top:52px" width="18" height="66" viewBox="0 0 18 66" fill="#6d7685">
 <rect x="1" y="2" width="11" height="12"></rect><path d="M3 5 h7 M3 8 h7 M3 11 h4" stroke="#3b4453" stroke-width="1"></path><path d="M10 8 l6 7 M16 8 l-6 7" stroke="#808997" stroke-width="1.500"></path>
 <path d="M2 25 h6 v12 h-6z"></path><path d="M6 28 h6 l3 3 v10 h-9z" fill="#78818f" stroke="#3b4453" stroke-width="0.700"></path>
 <rect x="2" y="48" width="10" height="13"></rect><path d="M4 52 h6 M4 55 h6" stroke="#3b4453" stroke-width="1"></path><path d="M9 60 l5 -5 l3 3 l-5 5z" fill="#808997"></path>
</svg>
<div class="ptitle" style="left: 1209px; letter-spacing: -0.15px;">Clipboard</div>


<!-- ===== document tabs ===== -->
<div class="abs" style="left:7px;top:163px;width:1913px;height:2px;background:#39414f"></div>
<div class="abs" style="left:7px;top:165px;width:1913px;height:1px;background:#2b3341"></div>
<svg class="abs" style="left:7px;top:141px" width="300" height="22" viewBox="0 0 300 22">
 <path d="M14 22 c6 0 6 -4 8 -11 c2 -9 4 -11 10 -11 h92 c7 0 8 5 8 11 c0 8 -3 11 -8 11z" fill="#2d3543"></path>
 <path d="M124 22 c6 0 8 -3 10 -11 c2 -9 4 -11 10 -11 h94 c6 0 8 3 10 11 c2 8 4 11 10 11z" fill="#39414f"></path>
 <path d="M256 0.500 h12 c5 0 6 4 7 9 c1 5 2 8 -2 8.500 h-8 c-5 0 -7 -2 -9 -9z" fill="#2f3745"></path>
 <path d="M229.500 7.500 l8 8 M237.500 7.500 l-8 8" stroke="#e6e6e6" stroke-width="1.500"></path>
 <path d="M262.500 11.500 h8 M266.500 7.500 v8" stroke="#d8dce3" stroke-width="1.700"></path>
</svg>
<div class="t" style="left: 36px; top: 148px; font-size: 12px; color: rgb(227, 230, 234); letter-spacing: -0.47px;">Start</div>
<div class="t" style="left: 151px; top: 148px; font-size: 12px; color: rgb(240, 242, 244); letter-spacing: -0.37px;">Drawing2*</div>


<!-- ===== task pane ===== -->
<div class="abs" style="left:1520px;top:166px;width:3px;height:853px;background:#2d3543"></div>
<div class="abs" style="left:1523px;top:166px;width:22px;height:26px;background:#343c4a"></div>
<div class="abs" style="left:1523px;top:309px;width:22px;height:359px;background:#2d3543"></div>
<div class="abs" style="left:1523px;top:429px;width:22px;height:1px;background:#3b4453"></div>
<div class="abs" style="left:1523px;top:549px;width:22px;height:1px;background:#3b4453"></div>
<div class="abs" style="left:1545px;top:169px;width:375px;height:20px;background:#2a3240"></div>
<div class="abs" style="left:1550px;top:174px;width:2px;height:9px;background:#7d8694"></div>
<div class="t" style="left: 1558px; top: 174px; font-size: 12px; color: rgb(240, 242, 244); letter-spacing: -1.18px;">TASK PANE</div>
<div class="t" style="left:1535px;top:251px;font-size:12px;color:#f0f2f4;transform:translate(-50%,-50%) rotate(-90deg)">Display Manager</div>
<div class="t" style="left:1535px;top:370px;font-size:12px;color:#c8cdd5;transform:translate(-50%,-50%) rotate(-90deg)">Map Explorer</div>
<div class="t" style="left:1535px;top:490px;font-size:12px;color:#c8cdd5;transform:translate(-50%,-50%) rotate(-90deg)">Map Book</div>
<div class="t" style="left:1535px;top:609px;font-size:12px;color:#c8cdd5;transform:translate(-50%,-50%) rotate(-90deg)">Survey</div>
<div class="t" style="left: 1553px; top: 199px; font-size: 11.5px; color: rgb(240, 242, 244); letter-spacing: -0.62px;">Display Map:</div>
<div class="abs" style="left:1622px;top:195px;width:290px;height:17px;background:#49536a;border:1px solid #57617a"></div>
<div class="t" style="left: 1625px; top: 199px; font-size: 11px; color: rgb(255, 255, 255); letter-spacing: -0.55px;">Default</div>
<svg class="abs" style="left:1900px;top:201px" width="9" height="6" viewBox="0 0 9 6"><path d="M0.500 0.800 h8 l-4 4.200z" fill="#e8eaee"></path></svg>
<div class="abs" style="left:1551px;top:221px;width:362px;height:51px;background:#39424f;border:1px solid #454e5e"></div>
<!-- toolbar icons -->
<svg class="abs" style="left:1556px;top:229px" width="150" height="25" viewBox="0 0 150 25">
 <ellipse cx="11.500" cy="5.500" rx="10" ry="4" fill="#e4e4e4"></ellipse><path d="M1.500 7.500 c2 4 18 4 20 0 v5 c-2 4 -18 4 -20 0z" fill="#d6d6d6"></path><path d="M1.500 14.500 c2 4 18 4 20 0 v5 c-2 4.500 -18 4.500 -20 0z" fill="#cfcfcf"></path>
 <path d="M31 21 c2 -6 6 -8 11 -8 c0 4 -4 8 -11 8z" fill="#a5815c"></path><path d="M42 12 l7 -7" stroke="#8b94a3" stroke-width="1.800"></path>
 <rect x="60.500" y="2.500" width="21" height="20" fill="#4a5363" stroke="#818a98" stroke-width="1"></rect><path d="M60 7 h22 M60 12 h22 M60 17 h22 M66 2 v21 M71 2 v21 M76 2 v21" stroke="#818a98" stroke-width="0.900"></path>
 <path d="M94 20 l14 -14" stroke="#e89a50" stroke-width="3.200" stroke-linecap="round"></path><path d="M92 3 c3 -2 6 -1 7 1 l9 9 c3 -1 6 1 6 5 l-3 -2 l-2 2 l2 3 c-4 1 -7 -2 -6 -6 l-9 -9 c-2 0 -4 -1 -4 -3z" fill="#f0f0f0"></path><path d="M104 3 l4 -2 l5 4 l-2 4z" fill="#f0f0f0"></path>
 <path d="M125 1.500 h12 l6 6 v16 h-18z" fill="#f6f0e0"></path><path d="M125 12 c6 0 8 -4 8 -10.500 h-8z" fill="#f9d9cf"></path><path d="M133 23.500 c0 -6 2 -9 10 -10 v10z" fill="#b8e6a0"></path><path d="M125 14 h8 v9.500 h-8z" fill="#cfe8f4"></path><path d="M137 1.500 v6 h6" fill="#fff" stroke="#c8c8c8" stroke-width="0.700"></path>
</svg>
<div class="t" style="left: 1558px; top: 256.5px; font-size: 9.8px; color: rgb(240, 242, 244); letter-spacing: -0.18px;">Data</div>
<div class="t" style="left: 1586px; top: 256.5px; font-size: 9.8px; color: rgb(111, 120, 135); letter-spacing: -0.16px;">Style</div>
<div class="t" style="left: 1616px; top: 256.5px; font-size: 9.8px; color: rgb(111, 120, 135); letter-spacing: -0.08px;">Table</div>
<div class="t" style="left: 1648px; top: 256.5px; font-size: 9.8px; color: rgb(240, 242, 244); letter-spacing: 0.03px;">Tools</div>
<div class="t" style="left: 1679px; top: 256.5px; font-size: 9.8px; color: rgb(240, 242, 244); letter-spacing: 0.01px;">Maps</div>
<!-- groups / draw order -->
<div class="abs" style="left:1552px;top:281px;width:58px;height:26px;background:#222933"></div>
<svg class="abs" style="left:1553px;top:286px" width="18" height="17" viewBox="0 0 18 17" fill="none" stroke="#f0f0f0" stroke-width="1.100"><path d="M1 4 c4 -3 8 1 15 -2 M1 8 c4 -3 8 1 15 -2 M1 12 c4 -3 8 1 15 -2 M1 15.500 c4 -3 8 1 15 -2"></path><path d="M1.500 2 v14 M15.500 1 v14"></path></svg>
<div class="t" style="left: 1574px; top: 290px; font-size: 11px; color: rgb(230, 233, 238); letter-spacing: -0.51px;">Groups</div>
<div class="abs" style="left:1617px;top:282px;width:1px;height:24px;background:#596272"></div>
<svg class="abs" style="left:1625px;top:286px" width="18" height="18" viewBox="0 0 18 18"><path d="M2 5 l8 -3 l5 2 l-8 3z M2 8 l8 -3 l5 2 l-8 3z M2 11 l8 -3 l5 2 l-8 3z" fill="#e4e4e4"></path><rect x="8.500" y="8.500" width="7" height="8.500" rx="1" fill="#f4f4f4"></rect><rect x="10" y="11.500" width="4" height="3" fill="#4a9ad8"></rect></svg>
<div class="t" style="left: 1648px; top: 290px; font-size: 11px; color: rgb(230, 233, 238); letter-spacing: -0.48px;">Draw Order</div>
<!-- tree -->
<div class="abs" style="left:1552px;top:313px;width:361px;height:692px;background:#3f4858;border:1px solid #566073"></div>
<div class="abs" style="left:1556px;top:317px;width:352px;height:683px;background:#f5f5f5"></div>
<svg class="abs" style="left:1565px;top:324px" width="16" height="12" viewBox="0 0 16 12"><path d="M1.800 2.500 l6.200 6.500 l6.200 -6.500" fill="none" stroke="#333" stroke-width="2.600"></path></svg>
<svg class="abs" style="left:1586px;top:323px" width="13" height="13" viewBox="0 0 13 13"><rect x="0.500" y="0.500" width="12" height="12" rx="1.500" fill="#fff" stroke="#9a9a9a"></rect><path d="M3 6.500 l2.500 2.700 l4.500 -5.200" fill="none" stroke="#444" stroke-width="1.300"></path></svg>
<svg class="abs" style="left:1604px;top:323px" width="16" height="14" viewBox="0 0 16 14"><path d="M0.500 13.500 v-12 h5 l1.500 2 h8.500 v10z" fill="#fff" stroke="#8a8a8a"></path></svg>
<div class="t" style="left: 1628px; top: 325px; font-size: 12px; font-weight: bold; color: rgb(34, 34, 34); letter-spacing: -1.2px;">SHP_1</div>
<svg class="abs" style="left:1607px;top:348px" width="13" height="13" viewBox="0 0 13 13"><rect x="0.500" y="0.500" width="12" height="12" rx="1.500" fill="#fff" stroke="#9a9a9a"></rect><path d="M3 6.500 l2.500 2.700 l4.500 -5.200" fill="none" stroke="#444" stroke-width="1.300"></path></svg>
<div class="abs" style="left:1633px;top:347px;width:53px;height:15px;background:#acd876;border:1px solid #2a2a2a"></div>
<div class="t" style="left: 1695px; top: 349px; font-size: 12px; color: rgb(51, 51, 51); letter-spacing: -1.2px;">pudzone</div>
<svg class="abs" style="left:1607px;top:374px" width="13" height="13" viewBox="0 0 13 13"><rect x="0.500" y="0.500" width="12" height="12" rx="1.500" fill="#fff" stroke="#9a9a9a"></rect><path d="M3 6.500 l2.500 2.700 l4.500 -5.200" fill="none" stroke="#444" stroke-width="1.300"></path></svg>
<div class="abs" style="left:1633px;top:373px;width:53px;height:15px;background:#c5b818;border:1px solid #2a2a2a"></div>
<div class="t" style="left: 1695px; top: 375px; font-size: 12px; color: rgb(51, 51, 51); letter-spacing: -0.68px;">pud</div>
<svg class="abs" style="left:1607px;top:400px" width="13" height="13" viewBox="0 0 13 13"><rect x="0.500" y="0.500" width="12" height="12" rx="1.500" fill="#fff" stroke="#9a9a9a"></rect><path d="M3 6.500 l2.500 2.700 l4.500 -5.200" fill="none" stroke="#444" stroke-width="1.300"></path></svg>
<div class="abs" style="left:1633px;top:399px;width:53px;height:15px;background:#a67b50;border:1px solid #2a2a2a"></div>
<div class="t" style="left: 1695px; top: 401px; font-size: 12px; color: rgb(51, 51, 51); letter-spacing: -0.3px;">gfzoning</div>
<svg class="abs" style="left:1607px;top:426px" width="13" height="13" viewBox="0 0 13 13"><rect x="0.500" y="0.500" width="12" height="12" rx="1.500" fill="#fff" stroke="#9a9a9a"></rect><path d="M3 6.500 l2.500 2.700 l4.500 -5.200" fill="none" stroke="#444" stroke-width="1.300"></path></svg>
<div class="abs" style="left:1651px;top:425px;width:16px;height:16px;border-radius:50%;background:#c9ad8f;border:1px solid #2a2a2a"></div>
<div class="t" style="left: 1695px; top: 427px; font-size: 12px; color: rgb(51, 51, 51); letter-spacing: -0.21px;">gftrafficcounts update</div>
<svg class="abs" style="left:1607px;top:452px" width="13" height="13" viewBox="0 0 13 13"><rect x="0.500" y="0.500" width="12" height="12" rx="1.500" fill="#fff" stroke="#9a9a9a"></rect><path d="M3 6.500 l2.500 2.700 l4.500 -5.200" fill="none" stroke="#444" stroke-width="1.300"></path></svg>
<div class="abs" style="left:1651px;top:451px;width:16px;height:16px;border-radius:50%;background:#f06040;border:1px solid #2a2a2a"></div>
<div class="t" style="left: 1695px; top: 453px; font-size: 12px; color: rgb(51, 51, 51); letter-spacing: -0.43px;">gfsigns</div>
<svg class="abs" style="left:1607px;top:479px" width="13" height="13" viewBox="0 0 13 13"><rect x="0.500" y="0.500" width="12" height="12" rx="1.500" fill="#fff" stroke="#9a9a9a"></rect><path d="M3 6.500 l2.500 2.700 l4.500 -5.200" fill="none" stroke="#444" stroke-width="1.300"></path></svg>
<div class="abs" style="left:1633px;top:477px;width:53px;height:15px;background:#6ccff6;border:1px solid #2a2a2a"></div>
<div class="t" style="left: 1695px; top: 480px; font-size: 12px; color: rgb(51, 51, 51); letter-spacing: -0.2px;">gfproperties</div>
<svg class="abs" style="left:1607px;top:505px" width="13" height="13" viewBox="0 0 13 13"><rect x="0.500" y="0.500" width="12" height="12" rx="1.500" fill="#fff" stroke="#9a9a9a"></rect><path d="M3 6.500 l2.500 2.700 l4.500 -5.200" fill="none" stroke="#444" stroke-width="1.300"></path></svg>
<div class="abs" style="left:1632px;top:510px;width:54px;height:1px;background:#f3e9a0"></div>
<div class="t" style="left: 1695px; top: 506px; font-size: 12px; color: rgb(51, 51, 51); letter-spacing: -0.5px;">ENG-centerline</div>

<svg class="abs" style="left:1565px;top:533px" width="16" height="12" viewBox="0 0 16 12"><path d="M1.800 2.500 l6.200 6.500 l6.200 -6.500" fill="none" stroke="#333" stroke-width="2.600"></path></svg>
<svg class="abs" style="left:1586px;top:532px" width="13" height="13" viewBox="0 0 13 13"><rect x="0.500" y="0.500" width="12" height="12" rx="1.500" fill="#fff" stroke="#9a9a9a"></rect><path d="M3 6.500 l2.500 2.700 l4.500 -5.200" fill="none" stroke="#444" stroke-width="1.300"></path></svg>
<div class="abs" style="left:1604px;top:531px;width:45px;height:15px;background:#fff"></div>
<div class="t" style="left: 1659px; top: 534px; font-size: 12px; font-style: italic; color: rgb(51, 51, 51); letter-spacing: -1px;">Map Base</div>
<svg class="abs" style="left:1607px;top:558px" width="13" height="13" viewBox="0 0 13 13"><rect x="0.500" y="0.500" width="12" height="12" rx="1.500" fill="#fff" stroke="#9a9a9a"></rect></svg>
<div class="abs" style="left:1625px;top:557px;width:45px;height:15px;background:#fff"></div>
<div class="abs" style="left:1628px;top:564px;width:39px;height:1px;background:#e6e6e6"></div>
<div class="t" style="left: 1680px; top: 560px; font-size: 12px; color: rgb(51, 51, 51); letter-spacing: -0.29px;">Default</div>


<!-- ===== layout tabs + status bar ===== -->
<svg class="abs" style="left:7px;top:1019px" width="230" height="20" viewBox="0 0 230 20">
 <path d="M8 0 h58 c-3 3 -3 12 -8 17 c-1 1.500 -3 2 -5 2 h-34 c-4 0 -6 -3 -7 -7z" fill="#3b4453"></path>
 <path d="M70 0 h56 c-3 3 -3 12 -8 17 c-1 1.500 -3 2 -5 2 h-32 c-4 0 -6 -3 -7 -7z" fill="#2d3543"></path>
 <path d="M130 0 h58 c-3 3 -3 12 -8 17 c-1 1.500 -3 2 -5 2 h-34 c-4 0 -6 -3 -7 -7z" fill="#2d3543"></path>
 <path d="M192 2 h18 c-1 5 -2 10 -5 14 h-12 c-3 0 -4 -3 -3 -7z" fill="#2d3543"></path>
 <path d="M196.500 9 h7 M200 5.500 v7" stroke="#aab1bd" stroke-width="1.600"></path>
</svg>
<div class="t" style="left: 28px; top: 1023px; font-size: 12px; font-weight: bold; color: rgb(255, 255, 255); letter-spacing: -0.53px;">Model</div>
<div class="t" style="left: 82px; top: 1023px; font-size: 12px; color: rgb(200, 205, 213); letter-spacing: -0.67px;">Layout1</div>
<div class="t" style="left: 143px; top: 1023px; font-size: 12px; color: rgb(200, 205, 213); letter-spacing: -0.67px;">Layout2</div>
<style>.sb{position:absolute;top:1021px;height:22px;background:#323a49}.sbb{background:#4a8acb}</style>
<div class="sb sbb" style="left:1160px;width:22px"></div>
<div class="sb" style="left:1185px;width:21px;background:#426d9f"></div>
<div class="sb" style="left:1208px;width:22px"></div>
<div class="sb" style="left:1232px;width:50px"></div>
<div class="sb" style="left:1285px;width:86px"></div>
<div class="sb" style="left:1373px;width:86px"></div>
<div class="sb sbb" style="left:1461px;width:22px"></div>
<div class="sb" style="left:1486px;width:44px"></div>
<div class="sb" style="left:1532px;width:61px"></div>
<div class="sb" style="left:1595px;width:22px"></div>
<div class="sb sbb" style="left:1617px;width:22px"></div>
<div class="sb" style="left:1639px;width:52px"></div>
<div class="sb sbb" style="left:1692px;width:22px"></div>
<div class="sb sbb" style="left:1715px;width:22px"></div>
<div class="sb" style="left:1737px;width:15px"></div>
<div class="sb sbb" style="left:1754px;width:22px"></div>
<div class="sb" style="left:1778px;width:38px"></div>
<div class="sb" style="left:1818px;width:24px"></div>
<div class="sb" style="left:1845px;width:26px"></div>
<div class="sb" style="left:1873px;width:47px"></div>
<svg class="abs" style="left:1160px;top:1021px" width="760" height="22" viewBox="0 0 760 22" fill="none">
 <!-- toggle arrows -->
 <path d="M4 7 h6 v-3 l5 4.500 l-5 4.500 v-3 h-6z" fill="#fff"></path><path d="M19 12 h-5 v-2.500 l-4.500 4 l4.500 4 v-2.500 h5z" fill="#fff"></path>
 <!-- ucs L -->
 <path d="M29.500 3 v15 h14" stroke="#9fb4cf" stroke-width="1.300"></path><circle cx="29.500" cy="18" r="1" fill="#9fb4cf"></circle>
 <path d="M52.500 3 v15.500 h13 M52.500 18.500 l10 -11" stroke="#d8dce3" stroke-width="1.200"></path><path d="M60 7 h3 v3" stroke="#d8dce3" stroke-width="1"></path>
 <!-- annotation scale -->
 <path d="M85 3 l-6.500 15 h13z" stroke="#e8e8e8" stroke-width="1.200"></path><path d="M85 7 v9 M83 9 l2 -2 l2 2 M83 14 l2 2 l2 -2" stroke="#e8e8e8" stroke-width="0.900"></path>
 <path d="M112 9 h6 l-3 3.500z" fill="#e8e8e8"></path>
 <!-- globe -->
 <circle cx="135.500" cy="11" r="7" stroke="#f0f0f0" stroke-width="1.300"></circle><path d="M130 8 c2 -3 5 -3 6 -1 c1 2 -2 3 -1 5 c1 2 -1 4 -2 5 c-2 -2 -1 -4 -3 -5z M138 9 c2 0 4 1 4 3 c-1 3 -3 4 -4 3 c-1 -2 -2 -4 0 -6z" fill="#f0f0f0"></path>
 <path d="M201 9 h6 l-3 3.500z" fill="#e8e8e8"></path>
 <!-- scale doc -->
 <path d="M218.500 4.500 h7 l4 3.500 v11 h-11z" stroke="#e0e0e0" stroke-width="1"></path><path d="M220 3 h6 M222 4 v15 M218 10 h11 M218 15 h11" stroke="#c8c8c8" stroke-width="0.800"></path>
 <path d="M291 9 h6 l-3 3.500z" fill="#e8e8e8"></path>
 <!-- lock -->
 <rect x="307" y="9.500" width="11" height="9" rx="1" fill="#fff"></rect><path d="M309.500 9.500 v-2.500 a3 3 0 0 1 6 0 v2.500" stroke="#fff" stroke-width="1.700"></path><rect x="311.800" y="12.500" width="1.500" height="3" fill="#4a8acb"></rect>
 <!-- grid -->
 <path d="M379.500 4 v14 M383.500 4 v14 M387.500 4 v14 M376 7.500 h15 M376 11.500 h15 M376 15.500 h15" stroke="#f0f0f0" stroke-width="1.200"></path>
 <g fill="#f0f0f0"><rect x="399" y="5" width="2" height="2"></rect><rect x="404" y="5" width="2" height="2"></rect><rect x="409" y="5" width="2" height="2"></rect><rect x="399" y="10" width="2" height="2"></rect><rect x="404" y="10" width="2" height="2"></rect><rect x="409" y="10" width="2" height="2"></rect><rect x="399" y="15" width="2" height="2"></rect><rect x="404" y="15" width="2" height="2"></rect><rect x="409" y="15" width="2" height="2"></rect></g>
 <path d="M421 9 h6 l-3 3.500z" fill="#e8e8e8"></path>
 <!-- ortho -->
 <path d="M438.500 4 v14.500 h14" stroke="#d8dce3" stroke-width="1.300"></path><path d="M438.500 14.500 h4 v4" stroke="#d8dce3" stroke-width="0.900"></path>
 <!-- polar -->
 <circle cx="467" cy="12" r="6" stroke="#e8f0fa" stroke-width="1.300"></circle><path d="M467 12 h9 M467 12 l6 -7" stroke="#e8f0fa" stroke-width="1.100"></path>
 <path d="M483 9 h6 l-3 3.500z" fill="#e8e8e8"></path>
 <!-- track -->
 <path d="M505.500 4 v15" stroke="#3cc878" stroke-width="1.200"></path><path d="M499 5 l11 13" stroke="#d8506a" stroke-width="1.200"></path><circle cx="505.500" cy="12" r="1.500" stroke="#d8d8d8" stroke-width="0.800"></circle>
 <path d="M521 9 h6 l-3 3.500z" fill="#e8e8e8"></path>
 <!-- osnap line -->
 <path d="M536 17 l13 -11 M536 18.500 h14" stroke="#e8f0fa" stroke-width="1.200"></path><circle cx="542" cy="12" r="1.500" fill="#fff"></circle>
 <!-- osnap square -->
 <rect x="560.500" y="6.500" width="12" height="12" stroke="#e8f0fa" stroke-width="1.300"></rect><rect x="558.500" y="4.500" width="4" height="4" fill="#4a8acb" stroke="#fff" stroke-width="1"></rect>
 <path d="M581 9 h6 l-3 3.500z" fill="#e8e8e8"></path>
 <!-- annotation person -->
 <path d="M605 3 l2.500 9 l4.500 7 l-7 -4 l-7 4 l4.500 -7z" fill="#fff"></path><circle cx="613" cy="6" r="2" stroke="#fff" stroke-width="1"></circle>
 <!-- gear -->
 <g fill="#f0f0f0"><circle cx="630" cy="11" r="5.300"></circle><rect x="628.500" y="3" width="3" height="16" rx="0.500"></rect><rect x="628.500" y="3" width="3" height="16" rx="0.500" transform="rotate(45 630 11)"></rect><rect x="628.500" y="3" width="3" height="16" rx="0.500" transform="rotate(90 630 11)"></rect><rect x="628.500" y="3" width="3" height="16" rx="0.500" transform="rotate(135 630 11)"></rect></g><circle cx="630" cy="11" r="2.200" fill="#323a49"></circle>
 <path d="M645 9 h6 l-3 3.500z" fill="#e8e8e8"></path>
 <!-- shapes -->
 <rect x="662.500" y="4.500" width="5" height="5" stroke="#e0e0e0" stroke-width="1"></rect><circle cx="674" cy="11" r="3" stroke="#e0e0e0" stroke-width="1"></circle><path d="M667 13.500 l3.500 5.500 h-7z" stroke="#e0e0e0" stroke-width="1"></path>
 <!-- warning -->
 <path d="M698 3.500 l8 15 h-16z" fill="#f4f4f4"></path><rect x="697.200" y="8.500" width="1.600" height="5.500" fill="#323a49"></rect><rect x="697.200" y="15" width="1.600" height="1.700" fill="#323a49"></rect>
 <!-- fullscreen -->
 <rect x="718.500" y="5.500" width="15" height="11" stroke="#e0e0e0" stroke-width="1.100"></rect><path d="M721 11 v3 h3 M731 11 v-3 h-3" stroke="#e0e0e0" stroke-width="1"></path>
 <!-- hamburger -->
 <path d="M740 5.500 h16 M740 11 h16 M740 16.500 h16" stroke="#f4f4f4" stroke-width="2"></path>
</svg>
<div class="t" style="left: 1255px; top: 1026px; font-size: 12px; color: rgb(240, 242, 244); letter-spacing: -0.84px;">1x</div>
<div class="t" style="left: 1307px; top: 1026px; font-size: 12px; color: rgb(240, 242, 244); letter-spacing: -0.24px;">ND83-NF</div>
<div class="t" style="left: 1395px; top: 1026px; font-size: 12px; color: rgb(240, 242, 244); letter-spacing: -0.82px;">1 : 75156.3</div>
<div class="t" style="left: 1489px; top: 1026px; font-size: 12px; color: rgb(240, 242, 244); letter-spacing: -0.94px;">MODEL</div>
<!-- bottom strip -->
<div class="abs" style="left:0;top:1045px;width:1920px;height:1px;background:#1a1c20"></div>
<div class="abs" style="left:0;top:1046px;width:52px;height:6px;background:#0a0a0a"></div>
<div class="abs" style="left:52px;top:1046px;width:321px;height:6px;background:#f3f2f0"></div>
<div class="abs" style="left:373px;top:1046px;width:1547px;height:6px;background:linear-gradient(90deg,#4a4a48 0,#4a4745 9%,#4a4644 56%,#3c3c3a 60%,#2a2a2a 78%,#1e1e1e 100%)"></div>
<div class="abs" style="left:465px;top:1046px;width:46px;height:6px;background:#636160"></div>
<div class="abs" style="left:1253px;top:1046px;width:46px;height:6px;background:#6e6e6a"></div>


<!-- ===== Overlay Analysis dialog ===== -->
<div class="abs" style="left:554px;top:244px;width:719px;height:557px;background:#fff;border:1px solid #6b6b6b;box-shadow:5px 6px 11px -1px rgba(0,0,0,0.300)">
<div style="position:absolute;left:0;top:0;width:718px;height:556px;color:#111">
<svg class="abs" style="left:9px;top:7px" width="16" height="16" viewBox="0 0 16 16"><rect x="0" y="0" width="15" height="15" fill="#fbeeee"></rect><path d="M2 13 L6.500 1.500 h2.500 L13.500 13 h-2.600 l-1 -2.800 h-4.300 l-1 2.800z M6.300 8 h2.900 l-1.450 -4.200z" fill="#c8201e"></path><path d="M9 13 h5 v1.200 h-5z" fill="#c8201e"></path></svg>
<div class="t" style="left: 27px; top: 9px; font-size: 11.5px; color: rgb(17, 17, 17); letter-spacing: -0.31px;">Overlay Analysis</div>
<svg class="abs" style="left:695px;top:8px" width="13" height="13" viewBox="0 0 13 13"><path d="M1.500 1.500 l10 10 M11.500 1.500 l-10 10" stroke="#222" stroke-width="1"></path></svg>
<svg class="abs" style="left:9px;top:60px" width="14" height="13" viewBox="0 0 14 13"><path d="M0.500 0.800 l12 5.700 l-12 5.700z" fill="#111"></path></svg>
<div class="t" style="left: 28.5px; top: 61px; font-size: 11.5px; font-weight: bold; color: rgb(17, 17, 17); letter-spacing: -0.36px;">Sources and Overlay Type</div>
<div class="t" style="left: 23.5px; top: 87px; font-size: 12px; color: rgb(17, 17, 17); letter-spacing: -0.37px;">Set Output and Settings</div>
<div class="t" style="left: 251px; top: 59px; font-size: 14px; color: rgb(17, 17, 17); letter-spacing: -0.56px;">Source</div>
<div class="abs" style="left:253px;top:81px;width:420px;height:19px;background:#fff;border:1px solid #6e6e6e"></div>
<div class="abs" style="left:255px;top:83px;width:401px;height:15px;background:#0a64d6;outline:1px dotted rgba(255,225,180,0.750);outline-offset:-1px"></div>
<div class="t" style="left: 257px; top: 85px; font-size: 10.5px; color: rgb(255, 255, 255); letter-spacing: -0.36px;">Layer:ENG-centerline (Lines)</div>
<div class="abs" style="left:657px;top:82px;width:15px;height:17px;background:#e9f0fa;border:1px solid #9db8d8"></div>
<svg class="abs" style="left:660px;top:87px" width="9" height="7" viewBox="0 0 9 7"><path d="M0.800 1.200 l3.700 3.800 l3.700 -3.800" fill="none" stroke="#333" stroke-width="1.200"></path></svg>
<div class="t" style="left: 251px; top: 124px; font-size: 14px; color: rgb(17, 17, 17); letter-spacing: -0.32px;">Overlay</div>
<div class="abs" style="left:253px;top:146px;width:420px;height:19px;background:#fff;border:1px solid #6e6e6e"></div>
<div class="t" style="left: 257px; top: 150px; font-size: 10.5px; color: rgb(17, 17, 17); letter-spacing: -0.45px;">Select Overlay</div>
<div class="abs" style="left:657px;top:147px;width:15px;height:17px;background:#e4e4e4;border:1px solid #c4c4c4"></div>
<svg class="abs" style="left:660px;top:152px" width="9" height="7" viewBox="0 0 9 7"><path d="M0.800 1.200 l3.700 3.800 l3.700 -3.800" fill="none" stroke="#333" stroke-width="1.200"></path></svg>
<!-- group box -->
<div class="abs" style="left:250px;top:208px;width:432px;height:306px;border:1px solid #dcdcdc;border-radius:3px"></div>
<div class="abs" style="left:257px;top:198px;width:184px;height:22px;background:#fff"></div>
<div class="t" style="left: 261px; top: 200px; font-size: 13.5px; color: rgb(17, 17, 17); letter-spacing: -0.41px;">Type:</div>
<div class="abs" style="left:297px;top:198px;width:141px;height:20px;background:#e6e6e6;border:1px solid #d2d2d2"></div>
<div class="t" style="left: 303px; top: 202px; font-size: 11.5px; color: rgb(17, 17, 17); letter-spacing: -0.23px;">Intersect</div>
<svg class="abs" style="left:424px;top:204px" width="8" height="6" viewBox="0 0 8 6"><path d="M0.800 1 l3.200 3.200 l3.200 -3.200" fill="none" stroke="#9a9a9a" stroke-width="1"></path></svg>
<div class="t" style="left: 272.5px; top: 236.5px; font-size: 14.5px; color: rgb(17, 17, 17); letter-spacing: 0.02px;">Line with Line</div>
<div class="t" style="left: 272.5px; top: 301.5px; font-size: 14.5px; color: rgb(17, 17, 17); letter-spacing: 0.14px;">Line with Polygon</div>
<div class="t" style="left: 272.5px; top: 367.5px; font-size: 14.5px; color: rgb(17, 17, 17); letter-spacing: 0.21px;">Point with Polygon</div>
<div class="t" style="left: 272.5px; top: 433px; font-size: 14.5px; color: rgb(17, 17, 17); letter-spacing: 0.17px;">Polygon with Polygon</div>
<svg class="abs" style="left:0;top:0" width="718" height="556" viewBox="0 0 718 556">
<g transform="translate(272.3,259.6)"><rect x="0.600" y="0.600" width="38.800" height="26" rx="1" fill="#fdfdfd" stroke="#6e6e6e" stroke-width="1.200"></rect><path d="M12 5 h18 M9.500 7 l5 4 h14 M9.500 16.500 h20" fill="none" stroke="#5a5a5a" stroke-width="1.300"></path></g>
<g transform="translate(336,259.6)"><rect x="0.600" y="0.600" width="38.800" height="26" rx="1" fill="#fdfdfd" stroke="#6e6e6e" stroke-width="1.200"></rect><path d="M9 10.800 h20 M9 22.300 h20" stroke="#777" stroke-width="1" stroke-dasharray="1.500 1"></path><path d="M11 19 l5 -5.500 l6 6 l6 -6" fill="none" stroke="#666" stroke-width="1.100" stroke-dasharray="2.500 1"></path></g>
<g transform="translate(415.2,259.6)"><rect x="0.600" y="0.600" width="38.800" height="26" rx="1" fill="#fdfdfd" stroke="#6e6e6e" stroke-width="1.200"></rect><path d="M14 10.800 h16" stroke="#4f9be0" stroke-width="1.300"></path></g>
<path d="M322.7 268.7 h3.200 v3 h3 v3.200 h-3 v3 h-3.200 v-3 h-3 v-3.200 h3z" fill="#2a2a2e"></path><path d="M382 272.3 h23 v-3.500 l5.500 4.500 l-5.500 4.500 v-3.500 h-23z" fill="#2a2a2e"></path>
<g transform="translate(272.3,325.3)"><rect x="0.600" y="0.600" width="38.800" height="26" rx="1" fill="#fdfdfd" stroke="#6e6e6e" stroke-width="1.200"></rect><path d="M9.500 8.500 h19 M9.500 17.800 h13" stroke="#5a5a5a" stroke-width="1.300"></path></g>
<g transform="translate(336,325.3)"><rect x="0.600" y="0.600" width="38.800" height="26" rx="1" fill="#fdfdfd" stroke="#6e6e6e" stroke-width="1.200"></rect><rect x="9.500" y="7.500" width="7" height="11" fill="#e6e6e6" stroke="#555" stroke-width="1.100"></rect><rect x="20" y="7.500" width="8.500" height="14" fill="#dcdcdc" stroke="#555" stroke-width="1.100"></rect></g>
<g transform="translate(415.2,325.3)"><rect x="0.600" y="0.600" width="38.800" height="26" rx="1" fill="#fdfdfd" stroke="#6e6e6e" stroke-width="1.200"></rect><path d="M9.500 8.500 h7 M20 8.500 h9 M9.500 17.800 h7.500" stroke="#4f9be0" stroke-width="1.300"></path></g>
<path d="M322.7 334.4 h3.200 v3 h3 v3.200 h-3 v3 h-3.200 v-3 h-3 v-3.200 h3z" fill="#2a2a2e"></path><path d="M382 338 h23 v-3.500 l5.500 4.500 l-5.500 4.500 v-3.500 h-23z" fill="#2a2a2e"></path>
<g transform="translate(272.3,391.3)"><rect x="0.600" y="0.600" width="38.800" height="26" rx="1" fill="#fdfdfd" stroke="#6e6e6e" stroke-width="1.200"></rect><circle cx="22.500" cy="6.500" r="2" fill="#222"></circle><circle cx="11.500" cy="14.500" r="2" fill="#222"></circle><circle cx="24.500" cy="17.500" r="2" fill="#222"></circle></g>
<g transform="translate(336,391.3)"><rect x="0.600" y="0.600" width="38.800" height="26" rx="1" fill="#fdfdfd" stroke="#6e6e6e" stroke-width="1.200"></rect><circle cx="24.500" cy="17" r="5.500" fill="#d8d8d8" stroke="#555" stroke-width="1.100"></circle></g>
<g transform="translate(415.2,391.3)"><rect x="0.600" y="0.600" width="38.800" height="26" rx="1" fill="#fdfdfd" stroke="#6e6e6e" stroke-width="1.200"></rect><circle cx="24.500" cy="17.200" r="2" fill="#4f9be0"></circle></g>
<path d="M322.7 400.4 h3.200 v3 h3 v3.200 h-3 v3 h-3.200 v-3 h-3 v-3.200 h3z" fill="#2a2a2e"></path><path d="M382 404 h23 v-3.500 l5.500 4.500 l-5.500 4.500 v-3.500 h-23z" fill="#2a2a2e"></path>
<g transform="translate(272.3,456.7)"><rect x="0.600" y="0.600" width="38.800" height="26" rx="1" fill="#fdfdfd" stroke="#6e6e6e" stroke-width="1.200"></rect><rect x="7.500" y="4.500" width="24" height="14.500" fill="#dde1e6" stroke="#555" stroke-width="1.200"></rect><path d="M19.500 4.500 v14.500" stroke="#555" stroke-width="1.200"></path></g>
<g transform="translate(336,456.7)"><rect x="0.600" y="0.600" width="38.800" height="26" rx="1" fill="#fdfdfd" stroke="#6e6e6e" stroke-width="1.200"></rect><circle cx="19" cy="16.500" r="7" fill="#d8d8d8" stroke="#555" stroke-width="1.100"></circle></g>
<g transform="translate(415.2,456.7)"><rect x="0.600" y="0.600" width="38.800" height="26" rx="1" fill="#fdfdfd" stroke="#6e6e6e" stroke-width="1.200"></rect><path d="M11.500 19 a7.500 8.500 0 0 1 15 0z" fill="#a8d2f0" stroke="#2f7fc8" stroke-width="1.200"></path><path d="M19 10.500 v8.500" stroke="#2f7fc8" stroke-width="1.200"></path></g>
<path d="M322.7 465.8 h3.200 v3 h3 v3.200 h-3 v3 h-3.200 v-3 h-3 v-3.200 h3z" fill="#2a2a2e"></path><path d="M382 469.4 h23 v-3.500 l5.500 4.500 l-5.500 4.500 v-3.500 h-23z" fill="#2a2a2e"></path>

<rect x="472" y="240" width="1.400" height="243" fill="#8a8a8a"></rect>
</svg>
<div class="t" style="left: 487px; top: 236px; font-size: 20.5px; color: rgb(17, 17, 17); letter-spacing: -0.4px;">Intersect</div>
<div class="t" style="left: 487px; top: 266.7px; font-size: 12.5px; color: rgb(26, 26, 26); letter-spacing: -0.07px;">Creates features from the</div>
<div class="t" style="left: 487px; top: 283.24px; font-size: 12.5px; color: rgb(26, 26, 26); letter-spacing: -0.17px;">overlapping areas of the</div>
<div class="t" style="left: 487px; top: 299.78px; font-size: 12.5px; color: rgb(26, 26, 26); letter-spacing: -0.15px;">source and overlay layers.</div>
<div class="t" style="left: 487px; top: 316.32px; font-size: 12.5px; color: rgb(26, 26, 26); letter-spacing: 0px;">Non-overlapping areas are</div>
<div class="t" style="left: 487px; top: 332.86px; font-size: 12.5px; color: rgb(26, 26, 26); letter-spacing: 0.09px;">discarded. Attributes from</div>
<div class="t" style="left: 487px; top: 349.4px; font-size: 12.5px; color: rgb(26, 26, 26); letter-spacing: 0.03px;">both the source and overlay</div>
<div class="t" style="left: 487px; top: 365.94px; font-size: 12.5px; color: rgb(26, 26, 26); letter-spacing: 0.06px;">are included in the new</div>
<div class="t" style="left: 487px; top: 382.48px; font-size: 12.5px; color: rgb(26, 26, 26); letter-spacing: -0.18px;">features.</div>

<!-- buttons -->
<style>.btn{position:absolute;top:529.500px;height:18px;width:75px;font-size:12.500px;text-align:center;line-height:17px;padding-top:1px}
.bon{background:#e1e1e1;border:1px solid #7a7a7a;color:#000;box-shadow:inset 0 0 0 1px #f4f4f4}
.boff{background:#f2f2f2;border:1px solid #cfcfcf;color:#9d9d9d}</style>
<div class="btn bon" style="left:302px">Cancel</div>
<div class="btn boff" style="left:382px;width:76px">&lt; Back</div>
<div class="btn boff" style="left:463px;width:76px">Next &gt;</div>
<div class="btn boff" style="left:544.500px;width:74px">Finish</div>
<div class="btn bon" style="left:623.500px">Help</div>
</div>
</div>



</body></html>
